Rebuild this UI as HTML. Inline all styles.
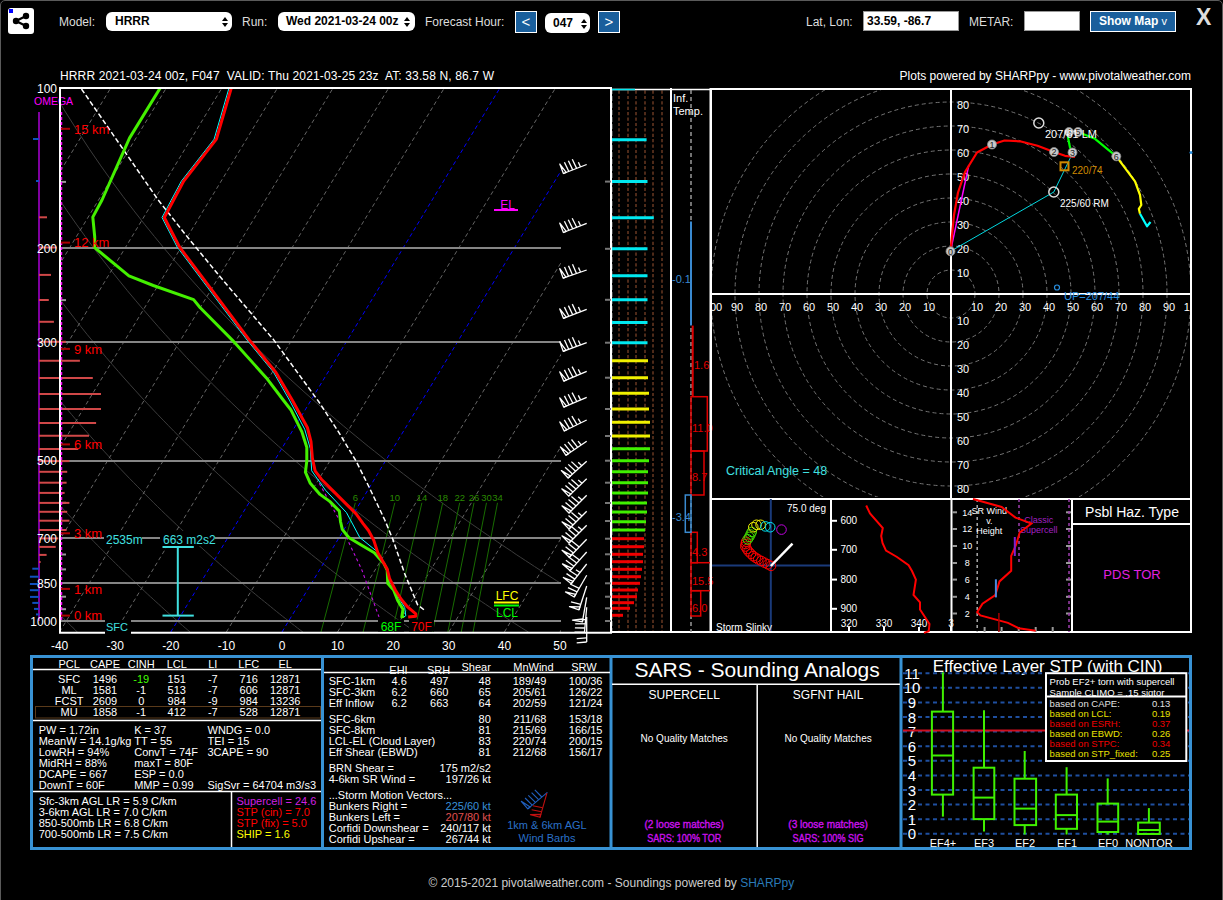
<!DOCTYPE html><html><head><meta charset="utf-8"><style>html,body{margin:0;padding:0;background:#000;width:1223px;height:900px;overflow:hidden;position:relative;font-family:"Liberation Sans", sans-serif;} svg text{font-family:"Liberation Sans", sans-serif;}</style></head><body>
<div style="position:absolute;left:0;top:0;width:1223px;height:1000px;box-sizing:border-box;border:1.5px solid #5a5a5a;border-radius:5px;"></div>
<div style="position:absolute;left:8px;top:8px;width:26px;height:26px;background:#fff;border-radius:3px;"></div>
<div style="position:absolute;left:9px;top:9px;width:4px;height:4px;background:#0000ff;"></div>
<svg style="position:absolute;left:8px;top:8px" width="26" height="26"><g fill="#000" stroke="#000" stroke-width="2.2"><line x1="8" y1="13" x2="18" y2="8"/><line x1="8" y1="13" x2="18" y2="18"/></g><circle cx="8" cy="13" r="3.2" fill="#000"/><circle cx="18" cy="8" r="3.2" fill="#000"/><circle cx="18" cy="18" r="3.2" fill="#000"/></svg>
<div style="position:absolute;color:#ddd;font-family:'Liberation Sans', sans-serif;font-size:12px;line-height:16px;left:59px;top:14px;">Model:</div>
<div style="position:absolute;color:#ddd;font-family:'Liberation Sans', sans-serif;font-size:12px;line-height:16px;left:242px;top:14px;">Run:</div>
<div style="position:absolute;color:#ddd;font-family:'Liberation Sans', sans-serif;font-size:12px;line-height:16px;left:425px;top:14px;">Forecast Hour:</div>
<div style="position:absolute;color:#ddd;font-family:'Liberation Sans', sans-serif;font-size:12px;line-height:16px;left:806px;top:14px;">Lat, Lon:</div>
<div style="position:absolute;color:#ddd;font-family:'Liberation Sans', sans-serif;font-size:12px;line-height:16px;left:969px;top:14px;">METAR:</div>
<div style="position:absolute;background:#fff;border-radius:6px;color:#000;font-family:'Liberation Sans', sans-serif;font-size:12px;font-weight:bold;line-height:19px;left:106px;top:12px;width:126px;height:19px;"><span style="position:absolute;left:9px;top:0">HRRR</span><svg style="position:absolute;left:115px;top:4px" width="8" height="12"><path d="M4 1 L7 5 L1 5 Z M4 11 L7 7 L1 7 Z" fill="#000"/></svg></div>
<div style="position:absolute;background:#fff;border-radius:6px;color:#000;font-family:'Liberation Sans', sans-serif;font-size:12px;font-weight:bold;line-height:19px;left:278px;top:12px;width:137px;height:19px;"><span style="position:absolute;left:8px;top:0">Wed 2021-03-24 00z</span><svg style="position:absolute;left:125px;top:4px" width="8" height="12"><path d="M4 1 L7 5 L1 5 Z M4 11 L7 7 L1 7 Z" fill="#000"/></svg></div>
<div style="position:absolute;background:#fff;border-radius:6px;color:#000;font-family:'Liberation Sans', sans-serif;font-size:12px;font-weight:bold;line-height:19px;left:545px;top:13px;width:45px;height:20px;"><span style="position:absolute;left:8px;top:1px">047</span><svg style="position:absolute;left:35px;top:5px" width="8" height="12"><path d="M4 1 L7 5 L1 5 Z M4 11 L7 7 L1 7 Z" fill="#000"/></svg></div>
<div style="position:absolute;background:#1a5f9c;border:1px solid #fff;box-sizing:border-box;color:#fff;font-family:'Liberation Sans', sans-serif;font-size:15px;text-align:center;left:515px;top:11px;width:22px;height:22px;line-height:19px;">&lt;</div>
<div style="position:absolute;background:#1a5f9c;border:1px solid #fff;box-sizing:border-box;color:#fff;font-family:'Liberation Sans', sans-serif;font-size:15px;text-align:center;left:598px;top:11px;width:22px;height:22px;line-height:19px;">&gt;</div>
<div style="position:absolute;left:863px;top:11px;width:96px;height:20px;background:#fff;box-sizing:border-box;border:1px solid #999;color:#000;font-family:'Liberation Sans', sans-serif;font-size:12px;font-weight:bold;line-height:18px;padding-left:3px;">33.59, -86.7</div>
<div style="position:absolute;left:1024px;top:11px;width:56px;height:20px;background:#fff;box-sizing:border-box;border:1px solid #999;"></div>
<div style="position:absolute;background:#1a5f9c;border:1px solid #fff;box-sizing:border-box;color:#fff;font-family:'Liberation Sans', sans-serif;font-size:15px;text-align:center;left:1090px;top:11px;width:86px;height:21px;font-size:12px;font-weight:bold;line-height:19px;">Show Map <span style="font-weight:normal;font-size:11px">v</span></div>
<div style="position:absolute;left:1196px;top:5px;color:#ddd;font-family:'Liberation Sans', sans-serif;font-size:23px;font-weight:bold;line-height:24px;">X</div>
<svg style="position:absolute;left:0;top:0" width="1223" height="900" viewBox="0 0 1223 900">
<defs><clipPath id="skc"><rect x="61" y="89" width="500" height="543"/></clipPath><clipPath id="skc2"><rect x="61" y="89" width="550" height="543"/></clipPath></defs>
<g clip-path="url(#skc)">
<polyline points="-35.2,632.3 -37.1,630.1 -39.1,627.9 -41.0,625.6 -43.0,623.4 -45.0,621.0 -47.0,618.7 -49.0,616.4 -51.0,614.0 -53.0,611.6 -55.0,609.2 -57.1,606.7 -59.2,604.2 -61.2,601.7 -63.3,599.2 -65.4,596.7 -67.5,594.1 -69.6,591.5 -71.7,588.8 -73.9,586.1 -76.0,583.4 -78.2,580.7 -80.4,577.9 -82.6,575.1 -84.8,572.3 -87.0,569.4 -89.2,566.5 -91.5,563.5 -93.7,560.5 -96.0,557.5 -98.3,554.5 -100.6,551.3 -102.9,548.2 -105.2,545.0 -107.6,541.8 -110.0,538.5 -112.3,535.1 -114.7,531.8 -117.1,528.3 -119.6,524.9 -122.0,521.3 -124.5,517.7 -127.0,514.1 -129.5,510.4 -132.0,506.6 -134.5,502.8 -137.1,498.9 -139.6,494.9 -142.2,490.9 -144.9,486.8 -147.5,482.6 -150.2,478.4 -152.8,474.1 -155.5,469.7 -158.3,465.2 -161.0,460.6 -163.8,455.9 -166.6,451.1 -169.4,446.3 -172.2,441.3 -175.1,436.2 -178.0,431.0 -180.9,425.7 -183.9,420.2 -186.8,414.6 -189.9,408.9 -192.9,403.1 -195.9,397.1 -199.0,390.9 -202.2,384.5 -205.3,378.0 -208.5,371.3 -211.7,364.4 -215.0,357.3 -218.3,349.9 -221.6,342.3 -224.9,334.5 -228.3,326.4 -231.8,317.9 -235.2,309.2 -238.7,300.1 -242.3,290.7 -245.8,280.8 -249.4,270.5 -253.1,259.8 -256.8,248.5 -260.5,236.6 -264.2,224.1 -268.0,210.8 -271.7,196.8 -275.5,181.9 -279.3,165.9 -283.1,148.7 -286.9,130.2 -290.6,110.1 -294.2,88.0" fill="none" stroke="#3c3c3c" stroke-width="1"/>
<polyline points="77.6,632.3 75.4,630.1 73.1,627.9 70.8,625.6 68.5,623.4 66.2,621.0 63.9,618.7 61.6,616.4 59.2,614.0 56.9,611.6 54.5,609.2 52.2,606.7 49.8,604.2 47.4,601.7 44.9,599.2 42.5,596.7 40.1,594.1 37.6,591.5 35.1,588.8 32.6,586.1 30.1,583.4 27.6,580.7 25.1,577.9 22.5,575.1 19.9,572.3 17.3,569.4 14.7,566.5 12.1,563.5 9.5,560.5 6.8,557.5 4.1,554.5 1.4,551.3 -1.3,548.2 -4.0,545.0 -6.8,541.8 -9.5,538.5 -12.3,535.1 -15.1,531.8 -18.0,528.3 -20.8,524.9 -23.7,521.3 -26.6,517.7 -29.5,514.1 -32.5,510.4 -35.4,506.6 -38.4,502.8 -41.4,498.9 -44.5,494.9 -47.6,490.9 -50.7,486.8 -53.8,482.6 -56.9,478.4 -60.1,474.1 -63.3,469.7 -66.5,465.2 -69.8,460.6 -73.1,455.9 -76.4,451.1 -79.8,446.3 -83.2,441.3 -86.6,436.2 -90.1,431.0 -93.6,425.7 -97.1,420.2 -100.7,414.6 -104.3,408.9 -107.9,403.1 -111.6,397.1 -115.4,390.9 -119.1,384.5 -123.0,378.0 -126.8,371.3 -130.7,364.4 -134.7,357.3 -138.7,349.9 -142.8,342.3 -146.9,334.5 -151.1,326.4 -155.3,317.9 -159.6,309.2 -163.9,300.1 -168.3,290.7 -172.8,280.8 -177.3,270.5 -181.9,259.8 -186.6,248.5 -191.3,236.6 -196.1,224.1 -201.0,210.8 -205.9,196.8 -210.9,181.9 -216.0,165.9 -221.1,148.7 -226.2,130.2 -231.4,110.1 -236.6,88.0" fill="none" stroke="#3c3c3c" stroke-width="1"/>
<polyline points="190.4,632.3 187.8,630.1 185.2,627.9 182.6,625.6 180.0,623.4 177.4,621.0 174.8,618.7 172.1,616.4 169.5,614.0 166.8,611.6 164.1,609.2 161.4,606.7 158.7,604.2 155.9,601.7 153.2,599.2 150.4,596.7 147.6,594.1 144.8,591.5 142.0,588.8 139.1,586.1 136.3,583.4 133.4,580.7 130.5,577.9 127.6,575.1 124.6,572.3 121.7,569.4 118.7,566.5 115.7,563.5 112.7,560.5 109.6,557.5 106.5,554.5 103.5,551.3 100.4,548.2 97.2,545.0 94.1,541.8 90.9,538.5 87.7,535.1 84.4,531.8 81.2,528.3 77.9,524.9 74.6,521.3 71.3,517.7 67.9,514.1 64.5,510.4 61.1,506.6 57.7,502.8 54.2,498.9 50.7,494.9 47.1,490.9 43.6,486.8 39.9,482.6 36.3,478.4 32.6,474.1 28.9,469.7 25.2,465.2 21.4,460.6 17.6,455.9 13.7,451.1 9.8,446.3 5.9,441.3 1.9,436.2 -2.1,431.0 -6.2,425.7 -10.3,420.2 -14.5,414.6 -18.7,408.9 -23.0,403.1 -27.3,397.1 -31.7,390.9 -36.1,384.5 -40.6,378.0 -45.1,371.3 -49.8,364.4 -54.4,357.3 -59.2,349.9 -64.0,342.3 -68.8,334.5 -73.8,326.4 -78.8,317.9 -83.9,309.2 -89.1,300.1 -94.4,290.7 -99.7,280.8 -105.2,270.5 -110.8,259.8 -116.4,248.5 -122.2,236.6 -128.0,224.1 -134.0,210.8 -140.1,196.8 -146.3,181.9 -152.6,165.9 -159.0,148.7 -165.6,130.2 -172.3,110.1 -179.1,88.0" fill="none" stroke="#3c3c3c" stroke-width="1"/>
<polyline points="303.1,632.3 300.3,630.1 297.4,627.9 294.5,625.6 291.6,623.4 288.6,621.0 285.7,618.7 282.7,616.4 279.7,614.0 276.7,611.6 273.7,609.2 270.7,606.7 267.6,604.2 264.5,601.7 261.4,599.2 258.3,596.7 255.2,594.1 252.0,591.5 248.8,588.8 245.6,586.1 242.4,583.4 239.2,580.7 235.9,577.9 232.6,575.1 229.3,572.3 226.0,569.4 222.6,566.5 219.2,563.5 215.8,560.5 212.4,557.5 209.0,554.5 205.5,551.3 202.0,548.2 198.4,545.0 194.9,541.8 191.3,538.5 187.7,535.1 184.0,531.8 180.4,528.3 176.7,524.9 172.9,521.3 169.1,517.7 165.3,514.1 161.5,510.4 157.6,506.6 153.7,502.8 149.8,498.9 145.8,494.9 141.8,490.9 137.8,486.8 133.7,482.6 129.5,478.4 125.4,474.1 121.2,469.7 116.9,465.2 112.6,460.6 108.3,455.9 103.9,451.1 99.4,446.3 94.9,441.3 90.4,436.2 85.8,431.0 81.1,425.7 76.4,420.2 71.7,414.6 66.8,408.9 62.0,403.1 57.0,397.1 52.0,390.9 46.9,384.5 41.8,378.0 36.5,371.3 31.2,364.4 25.8,357.3 20.4,349.9 14.8,342.3 9.2,334.5 3.5,326.4 -2.4,317.9 -8.3,309.2 -14.3,300.1 -20.5,290.7 -26.7,280.8 -33.1,270.5 -39.6,259.8 -46.2,248.5 -53.0,236.6 -59.9,224.1 -67.0,210.8 -74.2,196.8 -81.6,181.9 -89.2,165.9 -97.0,148.7 -105.0,130.2 -113.1,110.1 -121.5,88.0" fill="none" stroke="#3c3c3c" stroke-width="1"/>
<polyline points="415.9,632.3 412.7,630.1 409.5,627.9 406.3,625.6 403.1,623.4 399.8,621.0 396.6,618.7 393.3,616.4 390.0,614.0 386.6,611.6 383.3,609.2 379.9,606.7 376.5,604.2 373.1,601.7 369.7,599.2 366.2,596.7 362.7,594.1 359.2,591.5 355.7,588.8 352.1,586.1 348.6,583.4 345.0,580.7 341.3,577.9 337.7,575.1 334.0,572.3 330.3,569.4 326.6,566.5 322.8,563.5 319.0,560.5 315.2,557.5 311.4,554.5 307.5,551.3 303.6,548.2 299.7,545.0 295.7,541.8 291.7,538.5 287.7,535.1 283.6,531.8 279.5,528.3 275.4,524.9 271.2,521.3 267.0,517.7 262.8,514.1 258.5,510.4 254.2,506.6 249.8,502.8 245.4,498.9 241.0,494.9 236.5,490.9 232.0,486.8 227.4,482.6 222.8,478.4 218.1,474.1 213.4,469.7 208.6,465.2 203.8,460.6 198.9,455.9 194.0,451.1 189.0,446.3 184.0,441.3 178.9,436.2 173.7,431.0 168.5,425.7 163.2,420.2 157.8,414.6 152.4,408.9 146.9,403.1 141.3,397.1 135.7,390.9 129.9,384.5 124.1,378.0 118.2,371.3 112.2,364.4 106.1,357.3 99.9,349.9 93.6,342.3 87.2,334.5 80.7,326.4 74.1,317.9 67.4,309.2 60.5,300.1 53.5,290.7 46.3,280.8 39.0,270.5 31.6,259.8 24.0,248.5 16.2,236.6 8.2,224.1 0.0,210.8 -8.4,196.8 -17.0,181.9 -25.8,165.9 -34.9,148.7 -44.3,130.2 -54.0,110.1 -63.9,88.0" fill="none" stroke="#3c3c3c" stroke-width="1"/>
<polyline points="528.7,632.3 525.2,630.1 521.7,627.9 518.1,625.6 514.6,623.4 511.0,621.0 507.4,618.7 503.8,616.4 500.2,614.0 496.5,611.6 492.9,609.2 489.2,606.7 485.4,604.2 481.7,601.7 477.9,599.2 474.1,596.7 470.3,594.1 466.4,591.5 462.5,588.8 458.6,586.1 454.7,583.4 450.8,580.7 446.8,577.9 442.8,575.1 438.7,572.3 434.6,569.4 430.5,566.5 426.4,563.5 422.2,560.5 418.0,557.5 413.8,554.5 409.5,551.3 405.2,548.2 400.9,545.0 396.5,541.8 392.1,538.5 387.7,535.1 383.2,531.8 378.7,528.3 374.1,524.9 369.5,521.3 364.9,517.7 360.2,514.1 355.5,510.4 350.7,506.6 345.9,502.8 341.0,498.9 336.1,494.9 331.2,490.9 326.2,486.8 321.1,482.6 316.0,478.4 310.8,474.1 305.6,469.7 300.3,465.2 295.0,460.6 289.6,455.9 284.1,451.1 278.6,446.3 273.0,441.3 267.4,436.2 261.6,431.0 255.8,425.7 250.0,420.2 244.0,414.6 238.0,408.9 231.9,403.1 225.6,397.1 219.4,390.9 213.0,384.5 206.5,378.0 199.9,371.3 193.2,364.4 186.4,357.3 179.5,349.9 172.4,342.3 165.3,334.5 158.0,326.4 150.6,317.9 143.0,309.2 135.3,300.1 127.4,290.7 119.4,280.8 111.1,270.5 102.7,259.8 94.1,248.5 85.3,236.6 76.3,224.1 67.0,210.8 57.5,196.8 47.6,181.9 37.5,165.9 27.1,148.7 16.3,130.2 5.2,110.1 -6.4,88.0" fill="none" stroke="#3c3c3c" stroke-width="1"/>
<polyline points="641.4,632.3 637.6,630.1 633.8,627.9 630.0,625.6 626.1,623.4 622.2,621.0 618.3,618.7 614.4,616.4 610.4,614.0 606.4,611.6 602.4,609.2 598.4,606.7 594.3,604.2 590.3,601.7 586.1,599.2 582.0,596.7 577.8,594.1 573.6,591.5 569.4,588.8 565.1,586.1 560.9,583.4 556.5,580.7 552.2,577.9 547.8,575.1 543.4,572.3 539.0,569.4 534.5,566.5 530.0,563.5 525.4,560.5 520.8,557.5 516.2,554.5 511.6,551.3 506.9,548.2 502.1,545.0 497.4,541.8 492.5,538.5 487.7,535.1 482.8,531.8 477.9,528.3 472.9,524.9 467.8,521.3 462.8,517.7 457.7,514.1 452.5,510.4 447.3,506.6 442.0,502.8 436.7,498.9 431.3,494.9 425.9,490.9 420.4,486.8 414.8,482.6 409.2,478.4 403.6,474.1 397.9,469.7 392.1,465.2 386.2,460.6 380.3,455.9 374.3,451.1 368.2,446.3 362.1,441.3 355.9,436.2 349.6,431.0 343.2,425.7 336.7,420.2 330.2,414.6 323.5,408.9 316.8,403.1 310.0,397.1 303.0,390.9 296.0,384.5 288.8,378.0 281.6,371.3 274.2,364.4 266.7,357.3 259.0,349.9 251.3,342.3 243.3,334.5 235.3,326.4 227.0,317.9 218.7,309.2 210.1,300.1 201.3,290.7 192.4,280.8 183.3,270.5 173.9,259.8 164.3,248.5 154.5,236.6 144.4,224.1 134.0,210.8 123.3,196.8 112.3,181.9 100.9,165.9 89.1,148.7 77.0,130.2 64.3,110.1 51.2,88.0" fill="none" stroke="#3c3c3c" stroke-width="1"/>
<line x1="-607.6" y1="632" x2="-278.5" y2="88" stroke="#666" stroke-width="1" stroke-dasharray="4,3"/>
<line x1="-552.0" y1="632" x2="-222.9" y2="88" stroke="#666" stroke-width="1" stroke-dasharray="4,3"/>
<line x1="-496.4" y1="632" x2="-167.3" y2="88" stroke="#666" stroke-width="1" stroke-dasharray="4,3"/>
<line x1="-440.8" y1="632" x2="-111.7" y2="88" stroke="#666" stroke-width="1" stroke-dasharray="4,3"/>
<line x1="-385.2" y1="632" x2="-56.1" y2="88" stroke="#666" stroke-width="1" stroke-dasharray="4,3"/>
<line x1="-329.6" y1="632" x2="-0.5" y2="88" stroke="#666" stroke-width="1" stroke-dasharray="4,3"/>
<line x1="-274.0" y1="632" x2="55.1" y2="88" stroke="#666" stroke-width="1" stroke-dasharray="4,3"/>
<line x1="-218.4" y1="632" x2="110.7" y2="88" stroke="#666" stroke-width="1" stroke-dasharray="4,3"/>
<line x1="-162.8" y1="632" x2="166.3" y2="88" stroke="#666" stroke-width="1" stroke-dasharray="4,3"/>
<line x1="-107.2" y1="632" x2="221.9" y2="88" stroke="#666" stroke-width="1" stroke-dasharray="4,3"/>
<line x1="-51.6" y1="632" x2="277.5" y2="88" stroke="#666" stroke-width="1" stroke-dasharray="4,3"/>
<line x1="4.0" y1="632" x2="333.1" y2="88" stroke="#666" stroke-width="1" stroke-dasharray="4,3"/>
<line x1="59.6" y1="632" x2="388.7" y2="88" stroke="#666" stroke-width="1" stroke-dasharray="4,3"/>
<line x1="115.2" y1="632" x2="444.3" y2="88" stroke="#666" stroke-width="1" stroke-dasharray="4,3"/>
<line x1="170.8" y1="632" x2="499.9" y2="88" stroke="#0000ff" stroke-width="1" stroke-dasharray="4,3"/>
<line x1="226.4" y1="632" x2="555.5" y2="88" stroke="#666" stroke-width="1" stroke-dasharray="4,3"/>
<line x1="282.0" y1="632" x2="611.1" y2="88" stroke="#0000ff" stroke-width="1" stroke-dasharray="4,3"/>
<line x1="337.6" y1="632" x2="666.7" y2="88" stroke="#666" stroke-width="1" stroke-dasharray="4,3"/>
<line x1="393.2" y1="632" x2="722.3" y2="88" stroke="#666" stroke-width="1" stroke-dasharray="4,3"/>
<line x1="448.8" y1="632" x2="777.9" y2="88" stroke="#666" stroke-width="1" stroke-dasharray="4,3"/>
<line x1="504.4" y1="632" x2="833.5" y2="88" stroke="#666" stroke-width="1" stroke-dasharray="4,3"/>
<line x1="560.0" y1="632" x2="889.1" y2="88" stroke="#666" stroke-width="1" stroke-dasharray="4,3"/>
<line x1="320.9" y1="632.3" x2="355.3" y2="502.8" stroke="#186c00" stroke-width="1"/>
<text x="355.3" y="500.8" fill="#2a8a00" font-size="9.5" text-anchor="middle">6</text>
<line x1="363.0" y1="632.3" x2="394.8" y2="502.8" stroke="#186c00" stroke-width="1"/>
<text x="394.8" y="500.8" fill="#2a8a00" font-size="9.5" text-anchor="middle">10</text>
<line x1="392.0" y1="632.3" x2="421.9" y2="502.8" stroke="#186c00" stroke-width="1"/>
<text x="421.9" y="500.8" fill="#2a8a00" font-size="9.5" text-anchor="middle">14</text>
<line x1="414.3" y1="632.3" x2="442.7" y2="502.8" stroke="#186c00" stroke-width="1"/>
<text x="442.7" y="500.8" fill="#2a8a00" font-size="9.5" text-anchor="middle">18</text>
<line x1="432.5" y1="632.3" x2="459.7" y2="502.8" stroke="#186c00" stroke-width="1"/>
<text x="459.7" y="500.8" fill="#2a8a00" font-size="9.5" text-anchor="middle">22</text>
<line x1="447.8" y1="632.3" x2="474.0" y2="502.8" stroke="#186c00" stroke-width="1"/>
<text x="474.0" y="500.8" fill="#2a8a00" font-size="9.5" text-anchor="middle">26</text>
<line x1="461.2" y1="632.3" x2="486.5" y2="502.8" stroke="#186c00" stroke-width="1"/>
<text x="486.5" y="500.8" fill="#2a8a00" font-size="9.5" text-anchor="middle">30</text>
<line x1="473.0" y1="632.3" x2="497.5" y2="502.8" stroke="#186c00" stroke-width="1"/>
<text x="497.5" y="500.8" fill="#2a8a00" font-size="9.5" text-anchor="middle">34</text>
<line x1="60" y1="248.0" x2="561" y2="248.0" stroke="#858585" stroke-width="2"/>
<line x1="60" y1="342.0" x2="561" y2="342.0" stroke="#858585" stroke-width="2"/>
<line x1="60" y1="461.0" x2="561" y2="461.0" stroke="#858585" stroke-width="2"/>
<line x1="60" y1="538.0" x2="561" y2="538.0" stroke="#858585" stroke-width="2"/>
<line x1="60" y1="583.0" x2="561" y2="583.0" stroke="#858585" stroke-width="2"/>
<line x1="60" y1="621.0" x2="561" y2="621.0" stroke="#858585" stroke-width="2"/>
</g>
<line x1="60" y1="181.9" x2="66" y2="181.9" stroke="#999" stroke-width="2"/>
<line x1="60" y1="300.1" x2="66" y2="300.1" stroke="#999" stroke-width="2"/>
<line x1="60" y1="408.9" x2="66" y2="408.9" stroke="#999" stroke-width="2"/>
<line x1="60" y1="502.8" x2="66" y2="502.8" stroke="#999" stroke-width="2"/>
<line x1="60" y1="554.5" x2="66" y2="554.5" stroke="#999" stroke-width="2"/>
<line x1="60" y1="569.4" x2="66" y2="569.4" stroke="#999" stroke-width="2"/>
<line x1="60" y1="596.7" x2="66" y2="596.7" stroke="#999" stroke-width="2"/>
<line x1="60" y1="609.2" x2="66" y2="609.2" stroke="#999" stroke-width="2"/>
<text x="59.6" y="650" fill="#fff" font-size="12" text-anchor="middle">-40</text>
<text x="115.2" y="650" fill="#fff" font-size="12" text-anchor="middle">-30</text>
<text x="170.8" y="650" fill="#fff" font-size="12" text-anchor="middle">-20</text>
<text x="226.4" y="650" fill="#fff" font-size="12" text-anchor="middle">-10</text>
<text x="282.0" y="650" fill="#fff" font-size="12" text-anchor="middle">0</text>
<text x="337.6" y="650" fill="#fff" font-size="12" text-anchor="middle">10</text>
<text x="393.2" y="650" fill="#fff" font-size="12" text-anchor="middle">20</text>
<text x="448.8" y="650" fill="#fff" font-size="12" text-anchor="middle">30</text>
<text x="504.4" y="650" fill="#fff" font-size="12" text-anchor="middle">40</text>
<text x="560.0" y="650" fill="#fff" font-size="12" text-anchor="middle">50</text>
<g clip-path="url(#skc2)">
<polyline points="319.3,483.3 339.3,520.0 347.5,539.8 361.5,569.0 379.0,616.9" fill="none" stroke="#c010e0" stroke-width="1.1" stroke-dasharray="3,3"/>
<polyline points="81.5,89.0 158.2,200.0 189.8,240.0 221.0,277.8 273.9,340.1 319.3,402.5 339.4,433.3 356.1,461.1 369.3,487.5 384.8,520.0 393.0,539.8 404.7,573.7 417.5,604.6 423.9,609.8" fill="none" stroke="#fff" stroke-width="1.5" stroke-dasharray="5,2.5"/>
<polyline points="229.0,88.0 214.1,139.2 181.4,181.1 162.0,217.5 177.3,247.3 179.0,249.4 207.4,287.2 247.1,340.1 273.5,372.2 289.4,400.0 304.7,429.2 310.3,448.6 311.7,470.8 325.6,490.3 346.4,512.5 351.0,521.0 359.8,537.5 375.5,550.3 381.0,557.0 386.0,568.0 389.0,580.0 395.5,592.0 400.0,600.0 404.7,607.5 405.8,615.7 403.0,617.5" fill="none" stroke="#00ffff" stroke-width="1" />
<polyline points="160.2,88.0 129.5,138.1 102.0,200.0 92.8,217.1 94.7,236.7 94.7,247.7 128.9,275.8 153.3,285.5 193.6,299.6 200.0,307.5 232.3,340.1 266.4,377.9 283.2,400.0 290.8,409.7 301.9,431.9 306.8,447.2 306.8,461.1 305.4,472.2 310.3,483.3 320.0,494.4 329.7,501.4 339.4,511.1 340.5,521.5 342.3,529.3 348.7,537.5 360.3,544.5 374.3,552.7 383.7,563.2 387.2,570.2 387.8,583.6 393.6,590.0 397.7,600.5 403.0,609.3 401.8,616.9 404.0,616.3" fill="none" stroke="#44f000" stroke-width="3" stroke-linejoin="round"/>
<polyline points="231.3,88.0 216.4,139.2 183.7,181.1 164.3,217.5 179.6,247.3 181.3,249.4 209.7,287.2 249.4,340.1 275.8,372.2 292.2,400.0 299.9,413.9 307.5,427.8 311.0,441.7 312.4,458.3 315.1,470.8 321.4,479.2 335.3,493.1 347.8,505.6 356.1,513.9 363.1,523.6 368.5,530.5 373.8,540.4 377.8,552.7 387.2,569.0 389.5,578.3 395.3,590.0 401.2,599.3 407.0,606.3 415.8,613.9 415.8,616.3 408.2,616.9" fill="none" stroke="#ff0000" stroke-width="3" stroke-linejoin="round"/>
</g>
<text x="34" y="104.8" fill="#ff00ff" font-size="10.5">OMEGA</text>
<line x1="39" y1="112" x2="39" y2="621" stroke="#8000a0" stroke-width="2"/>
<line x1="39" y1="139.0" x2="33.0" y2="139.0" stroke="#1050c0" stroke-width="2"/>
<line x1="39" y1="181.0" x2="36.0" y2="181.0" stroke="#1050c0" stroke-width="2"/>
<line x1="39" y1="217.3" x2="47.0" y2="217.3" stroke="#d04848" stroke-width="2"/>
<line x1="39" y1="247.5" x2="57.0" y2="247.5" stroke="#d04848" stroke-width="2"/>
<line x1="39" y1="274.9" x2="51.0" y2="274.9" stroke="#d04848" stroke-width="2"/>
<line x1="39" y1="300.0" x2="48.8" y2="300.0" stroke="#d04848" stroke-width="2"/>
<line x1="39" y1="321.8" x2="53.9" y2="321.8" stroke="#d04848" stroke-width="2"/>
<line x1="39" y1="341.8" x2="66.0" y2="341.8" stroke="#d04848" stroke-width="2"/>
<line x1="39" y1="360.7" x2="79.9" y2="360.7" stroke="#d04848" stroke-width="2"/>
<line x1="39" y1="378.0" x2="92.8" y2="378.0" stroke="#d04848" stroke-width="2"/>
<line x1="39" y1="394.0" x2="101.0" y2="394.0" stroke="#d04848" stroke-width="2"/>
<line x1="39" y1="408.9" x2="101.0" y2="408.9" stroke="#d04848" stroke-width="2"/>
<line x1="39" y1="422.9" x2="96.1" y2="422.9" stroke="#d04848" stroke-width="2"/>
<line x1="39" y1="435.8" x2="89.0" y2="435.8" stroke="#d04848" stroke-width="2"/>
<line x1="39" y1="448.9" x2="78.3" y2="448.9" stroke="#d04848" stroke-width="2"/>
<line x1="39" y1="461.1" x2="69.4" y2="461.1" stroke="#d04848" stroke-width="2"/>
<line x1="39" y1="471.8" x2="67.2" y2="471.8" stroke="#d04848" stroke-width="2"/>
<line x1="39" y1="482.7" x2="66.6" y2="482.7" stroke="#d04848" stroke-width="2"/>
<line x1="39" y1="492.9" x2="64.6" y2="492.9" stroke="#d04848" stroke-width="2"/>
<line x1="39" y1="502.9" x2="69.4" y2="502.9" stroke="#d04848" stroke-width="2"/>
<line x1="39" y1="511.8" x2="67.2" y2="511.8" stroke="#d04848" stroke-width="2"/>
<line x1="39" y1="520.7" x2="69.4" y2="520.7" stroke="#d04848" stroke-width="2"/>
<line x1="39" y1="530.0" x2="66.6" y2="530.0" stroke="#d04848" stroke-width="2"/>
<line x1="39" y1="538.4" x2="58.3" y2="538.4" stroke="#d04848" stroke-width="2"/>
<line x1="39" y1="546.9" x2="55.7" y2="546.9" stroke="#d04848" stroke-width="2"/>
<line x1="39" y1="554.9" x2="46.6" y2="554.9" stroke="#d04848" stroke-width="2"/>
<line x1="39" y1="562.0" x2="40.6" y2="562.0" stroke="#d04848" stroke-width="2"/>
<line x1="39" y1="568.7" x2="32.3" y2="568.7" stroke="#1050c0" stroke-width="2"/>
<line x1="39" y1="576.7" x2="29.9" y2="576.7" stroke="#1050c0" stroke-width="2"/>
<line x1="39" y1="584.0" x2="29.9" y2="584.0" stroke="#1050c0" stroke-width="2"/>
<line x1="39" y1="590.2" x2="29.9" y2="590.2" stroke="#1050c0" stroke-width="2"/>
<line x1="39" y1="596.9" x2="30.0" y2="596.9" stroke="#1050c0" stroke-width="2"/>
<line x1="39" y1="602.9" x2="32.3" y2="602.9" stroke="#1050c0" stroke-width="2"/>
<line x1="39" y1="608.9" x2="34.0" y2="608.9" stroke="#1050c0" stroke-width="2"/>
<line x1="39" y1="614.4" x2="36.0" y2="614.4" stroke="#1050c0" stroke-width="2"/>
<line x1="59" y1="88" x2="612" y2="88" stroke="#fff" stroke-width="2"/>
<line x1="60" y1="88" x2="60" y2="633" stroke="#fff" stroke-width="2"/>
<line x1="59" y1="632.8" x2="612" y2="632.8" stroke="#fff" stroke-width="2"/>
<line x1="611" y1="88" x2="611" y2="633" stroke="#fff" stroke-width="2"/>
<line x1="61.5" y1="112" x2="61.5" y2="621" stroke="#ff00ff" stroke-width="1.5" stroke-dasharray="3,2"/>
<line x1="61" y1="128.8" x2="70" y2="128.8" stroke="#aa0000" stroke-width="2"/>
<text x="74" y="133.6" fill="#ff0000" font-size="13">15 km</text>
<line x1="61" y1="242.6" x2="70" y2="242.6" stroke="#aa0000" stroke-width="2"/>
<text x="74" y="247.4" fill="#ff0000" font-size="13">12 km</text>
<line x1="61" y1="348.9" x2="70" y2="348.9" stroke="#aa0000" stroke-width="2"/>
<text x="74" y="353.7" fill="#ff0000" font-size="13">9 km</text>
<line x1="61" y1="444.4" x2="70" y2="444.4" stroke="#aa0000" stroke-width="2"/>
<text x="74" y="449.2" fill="#ff0000" font-size="13">6 km</text>
<line x1="61" y1="533.3" x2="70" y2="533.3" stroke="#aa0000" stroke-width="2"/>
<text x="74" y="538.1" fill="#ff0000" font-size="13">3 km</text>
<line x1="61" y1="588.9" x2="70" y2="588.9" stroke="#aa0000" stroke-width="2"/>
<text x="74" y="593.7" fill="#ff0000" font-size="13">1 km</text>
<line x1="61" y1="615.6" x2="70" y2="615.6" stroke="#aa0000" stroke-width="2"/>
<text x="74" y="620.4" fill="#ff0000" font-size="13">0 km</text>
<line x1="177.8" y1="547" x2="177.8" y2="615.6" stroke="#40e0e0" stroke-width="2"/>
<line x1="162.5" y1="547" x2="193.8" y2="547" stroke="#40e0e0" stroke-width="2"/>
<line x1="162.5" y1="615.6" x2="193.8" y2="615.6" stroke="#40e0e0" stroke-width="2"/>
<rect x="104" y="531" width="38" height="15" fill="#000"/><text x="106" y="543.5" fill="#40e0e0" font-size="12">2535m</text>
<rect x="160" y="531" width="55" height="15" fill="#000"/><text x="163" y="543.5" fill="#40e0e0" font-size="12">663 m2s2</text>
<rect x="105" y="619.8" width="26" height="14.5" fill="#000"/><text x="106" y="631.3" fill="#40e0e0" font-size="11">SFC</text>
<rect x="378" y="619.5" width="26" height="12" fill="#000"/><text x="391" y="631" fill="#00ff00" font-size="12" text-anchor="middle">68F</text>
<rect x="409" y="619.5" width="25" height="12" fill="#000"/><text x="421.5" y="631" fill="#ff0000" font-size="12" text-anchor="middle">70F</text>
<text x="507" y="600" fill="#ffff00" font-size="12" text-anchor="middle">LFC</text>
<line x1="494" y1="602.5" x2="519" y2="602.5" stroke="#ffff00" stroke-width="2"/>
<line x1="494" y1="605.5" x2="519" y2="605.5" stroke="#00ff00" stroke-width="2"/>
<text x="507" y="617" fill="#00ff00" font-size="12" text-anchor="middle">LCL</text>
<text x="507.5" y="209" fill="#ff00ff" font-size="12" text-anchor="middle">EL</text>
<line x1="494" y1="210" x2="518" y2="210" stroke="#ff00ff" stroke-width="2"/>
<text x="57" y="92.5" fill="#fff" font-size="12" text-anchor="end">100</text>
<text x="57" y="253.0" fill="#fff" font-size="12" text-anchor="end">200</text>
<text x="57" y="346.8" fill="#fff" font-size="12" text-anchor="end">300</text>
<text x="57" y="465.1" fill="#fff" font-size="12" text-anchor="end">500</text>
<text x="57" y="543.0" fill="#fff" font-size="12" text-anchor="end">700</text>
<text x="57" y="587.9" fill="#fff" font-size="12" text-anchor="end">850</text>
<text x="57" y="625.5" fill="#fff" font-size="12" text-anchor="end">1000</text>
<g stroke="#fff" stroke-width="1.3" stroke-linejoin="round" fill="none">
<line x1="586.7" y1="164.5" x2="563.4" y2="173.5"/>
<polygon points="563.4,173.5 559.8,164.1 566.2,172.4" fill="none"/>
<line x1="568.8" y1="171.4" x2="564.4" y2="162.3"/>
<line x1="572.7" y1="169.9" x2="568.4" y2="160.8"/>
<line x1="576.6" y1="168.4" x2="572.3" y2="159.3"/>
<line x1="580.5" y1="166.9" x2="578.4" y2="162.3"/>
<line x1="586.7" y1="223.3" x2="563.4" y2="232.5"/>
<polygon points="563.4,232.5 559.8,223.2 566.2,231.4" fill="none"/>
<line x1="568.8" y1="230.3" x2="564.4" y2="221.3"/>
<line x1="572.7" y1="228.8" x2="568.3" y2="219.8"/>
<line x1="576.7" y1="227.3" x2="572.2" y2="218.2"/>
<line x1="580.6" y1="225.7" x2="578.4" y2="221.2"/>
<line x1="586.7" y1="270.0" x2="563.1" y2="278.1"/>
<polygon points="563.1,278.1 559.8,268.7 565.9,277.2" fill="none"/>
<line x1="568.5" y1="276.3" x2="564.5" y2="267.1"/>
<line x1="572.5" y1="274.9" x2="568.5" y2="265.7"/>
<line x1="576.5" y1="273.5" x2="572.5" y2="264.3"/>
<line x1="580.5" y1="272.1" x2="578.5" y2="267.6"/>
<line x1="586.7" y1="309.3" x2="563.4" y2="318.3"/>
<polygon points="563.4,318.3 559.8,308.9 566.2,317.2" fill="none"/>
<line x1="568.8" y1="316.2" x2="564.4" y2="307.1"/>
<line x1="572.7" y1="314.7" x2="568.4" y2="305.6"/>
<line x1="576.6" y1="313.2" x2="572.3" y2="304.1"/>
<line x1="580.5" y1="311.7" x2="578.4" y2="307.1"/>
<line x1="586.7" y1="342.7" x2="563.2" y2="351.3"/>
<polygon points="563.2,351.3 559.8,341.9 566.0,350.2" fill="none"/>
<line x1="568.7" y1="349.3" x2="564.5" y2="340.1"/>
<line x1="572.6" y1="347.8" x2="568.4" y2="338.7"/>
<line x1="576.6" y1="346.4" x2="572.4" y2="337.3"/>
<line x1="580.5" y1="345.0" x2="578.4" y2="340.4"/>
<line x1="586.7" y1="371.3" x2="563.7" y2="381.1"/>
<polygon points="563.7,381.1 559.8,371.9 566.4,379.9" fill="none"/>
<line x1="569.0" y1="378.8" x2="564.4" y2="369.9"/>
<line x1="572.9" y1="377.2" x2="568.2" y2="368.3"/>
<line x1="576.8" y1="375.5" x2="572.1" y2="366.6"/>
<line x1="580.6" y1="373.9" x2="578.3" y2="369.4"/>
<line x1="586.7" y1="397.3" x2="563.7" y2="407.1"/>
<polygon points="563.7,407.1 559.8,397.9 566.4,405.9" fill="none"/>
<line x1="569.0" y1="404.8" x2="564.4" y2="395.9"/>
<line x1="572.9" y1="403.2" x2="568.2" y2="394.3"/>
<line x1="576.8" y1="401.5" x2="572.1" y2="392.6"/>
<line x1="580.6" y1="399.9" x2="578.3" y2="395.4"/>
<line x1="586.7" y1="420.0" x2="564.2" y2="431.0"/>
<polygon points="564.2,431.0 559.8,422.0 566.9,429.6" fill="none"/>
<line x1="569.4" y1="428.4" x2="564.3" y2="419.8"/>
<line x1="573.2" y1="426.6" x2="568.1" y2="417.9"/>
<line x1="577.0" y1="424.7" x2="571.9" y2="416.1"/>
<line x1="580.8" y1="422.9" x2="578.2" y2="418.6"/>
<line x1="586.7" y1="441.3" x2="566.0" y2="455.3"/>
<polygon points="566.0,455.3 560.4,447.0 568.5,453.6" fill="none"/>
<line x1="570.8" y1="452.0" x2="564.5" y2="444.2"/>
<line x1="574.3" y1="449.7" x2="568.0" y2="441.8"/>
<line x1="577.7" y1="447.3" x2="571.5" y2="439.5"/>
<line x1="581.2" y1="445.0" x2="578.1" y2="441.1"/>
<line x1="586.7" y1="461.3" x2="568.1" y2="478.0"/>
<polygon points="568.1,478.0 561.4,470.6 570.4,476.0" fill="none"/>
<line x1="572.4" y1="474.1" x2="565.1" y2="467.3"/>
<line x1="575.6" y1="471.3" x2="568.3" y2="464.4"/>
<line x1="578.7" y1="468.5" x2="571.4" y2="461.6"/>
<line x1="581.8" y1="465.7" x2="578.2" y2="462.3"/>
<line x1="586.7" y1="478.7" x2="568.7" y2="496.1"/>
<polygon points="568.7,496.1 561.8,488.9 570.9,494.0" fill="none"/>
<line x1="572.9" y1="492.0" x2="565.4" y2="485.4"/>
<line x1="575.9" y1="489.1" x2="568.4" y2="482.5"/>
<line x1="578.9" y1="486.2" x2="571.4" y2="479.6"/>
<line x1="582.0" y1="483.3" x2="578.2" y2="480.0"/>
<line x1="586.7" y1="495.3" x2="569.0" y2="513.0"/>
<polygon points="569.0,513.0 562.0,505.9 571.1,510.9" fill="none"/>
<line x1="573.1" y1="508.9" x2="565.5" y2="502.4"/>
<line x1="576.1" y1="505.9" x2="568.5" y2="499.4"/>
<line x1="579.1" y1="502.9" x2="571.4" y2="496.4"/>
<line x1="582.0" y1="500.0" x2="578.2" y2="496.7"/>
<line x1="586.7" y1="511.3" x2="569.0" y2="529.0"/>
<polygon points="569.0,529.0 562.0,521.9 571.1,526.9" fill="none"/>
<line x1="573.1" y1="524.9" x2="565.5" y2="518.4"/>
<line x1="576.1" y1="521.9" x2="568.5" y2="515.4"/>
<line x1="579.1" y1="518.9" x2="571.4" y2="512.4"/>
<line x1="582.0" y1="516.0" x2="578.2" y2="512.7"/>
<line x1="586.7" y1="525.3" x2="569.0" y2="543.0"/>
<polygon points="569.0,543.0 562.0,535.9 571.1,540.9" fill="none"/>
<line x1="573.1" y1="538.9" x2="565.5" y2="532.4"/>
<line x1="576.1" y1="535.9" x2="568.5" y2="529.4"/>
<line x1="579.1" y1="532.9" x2="571.4" y2="526.4"/>
<line x1="582.0" y1="530.0" x2="578.2" y2="526.7"/>
<line x1="586.7" y1="539.3" x2="569.3" y2="557.3"/>
<polygon points="569.3,557.3 562.1,550.3 571.4,555.1" fill="none"/>
<line x1="573.4" y1="553.1" x2="565.6" y2="546.7"/>
<line x1="576.3" y1="550.1" x2="568.5" y2="543.7"/>
<line x1="579.2" y1="547.1" x2="571.4" y2="540.7"/>
<line x1="586.7" y1="552.0" x2="570.0" y2="570.6"/>
<polygon points="570.0,570.6 562.5,563.9 572.0,568.3" fill="none"/>
<line x1="573.9" y1="566.3" x2="565.9" y2="560.2"/>
<line x1="576.7" y1="563.1" x2="568.7" y2="557.1"/>
<line x1="579.5" y1="560.0" x2="571.5" y2="553.9"/>
<line x1="586.7" y1="564.0" x2="571.3" y2="583.7"/>
<polygon points="571.3,583.7 563.4,577.5 573.2,581.3" fill="none"/>
<line x1="574.9" y1="579.1" x2="566.5" y2="573.6"/>
<line x1="577.5" y1="575.8" x2="569.1" y2="570.3"/>
<line x1="580.1" y1="572.5" x2="575.9" y2="569.7"/>
<line x1="586.7" y1="575.3" x2="574.2" y2="597.0"/>
<polygon points="574.2,597.0 565.5,592.0 575.7,594.4" fill="none"/>
<line x1="577.1" y1="591.9" x2="568.0" y2="587.6"/>
<line x1="579.2" y1="588.3" x2="570.1" y2="584.0"/>
<line x1="586.7" y1="586.0" x2="579.0" y2="609.8"/>
<polygon points="579.0,609.8 569.5,606.7 579.9,606.9" fill="none"/>
<line x1="580.8" y1="604.3" x2="571.0" y2="601.9"/>
<line x1="586.7" y1="597.3" x2="582.4" y2="621.9"/>
<polygon points="582.4,621.9 572.5,620.2 582.9,619.0" fill="none"/>
<line x1="586.7" y1="607.3" x2="584.5" y2="632.2"/>
<line x1="584.5" y1="632.2" x2="574.5" y2="632.1"/>
<line x1="584.9" y1="628.0" x2="574.9" y2="627.9"/>
<line x1="585.3" y1="623.8" x2="575.2" y2="623.8"/>
<line x1="585.6" y1="619.7" x2="580.6" y2="619.6"/>
<line x1="586.7" y1="617.0" x2="586.7" y2="642.0"/>
<line x1="586.7" y1="642.0" x2="576.7" y2="642.8"/>
<line x1="586.7" y1="637.8" x2="576.7" y2="638.6"/>
</g>
<line x1="619.0" y1="90.5" x2="619.0" y2="631" stroke="#683822" stroke-width="1.5" stroke-dasharray="3.2,2.2"/>
<line x1="628.0" y1="90.5" x2="628.0" y2="631" stroke="#683822" stroke-width="1.5" stroke-dasharray="3.2,2.2"/>
<line x1="636.0" y1="90.5" x2="636.0" y2="631" stroke="#683822" stroke-width="1.5" stroke-dasharray="3.2,2.2"/>
<line x1="645.0" y1="90.5" x2="645.0" y2="631" stroke="#683822" stroke-width="1.5" stroke-dasharray="3.2,2.2"/>
<line x1="653.0" y1="90.5" x2="653.0" y2="631" stroke="#683822" stroke-width="1.5" stroke-dasharray="3.2,2.2"/>
<line x1="662.0" y1="90.5" x2="662.0" y2="631" stroke="#683822" stroke-width="1.5" stroke-dasharray="3.2,2.2"/>
<line x1="611.5" y1="89" x2="611.5" y2="632" stroke="#fff" stroke-width="1.5" stroke-dasharray="5,2"/>
<line x1="671" y1="88" x2="671" y2="632" stroke="#fff" stroke-width="2"/>
<line x1="710.5" y1="88" x2="710.5" y2="632" stroke="#fff" stroke-width="2"/>
<line x1="611" y1="632" x2="711" y2="632" stroke="#fff" stroke-width="2"/>
<line x1="611" y1="89.5" x2="711" y2="89.5" stroke="#fff" stroke-width="1.5"/>
<line x1="612" y1="89.5" x2="635" y2="89.5" stroke="#00e8f0" stroke-width="1.5"/>
<line x1="612" y1="139.7" x2="646.6" y2="139.7" stroke="#00e8f0" stroke-width="3"/>
<line x1="612" y1="181.6" x2="647.5" y2="181.6" stroke="#00e8f0" stroke-width="3"/>
<line x1="612" y1="217.7" x2="653.8" y2="217.7" stroke="#00e8f0" stroke-width="3"/>
<line x1="612" y1="248.8" x2="647.5" y2="248.8" stroke="#00e8f0" stroke-width="3"/>
<line x1="612" y1="275.8" x2="647.5" y2="275.8" stroke="#00e8f0" stroke-width="3"/>
<line x1="612" y1="299.8" x2="647.5" y2="299.8" stroke="#00e8f0" stroke-width="3"/>
<line x1="612" y1="322.5" x2="647.5" y2="322.5" stroke="#00e8f0" stroke-width="3"/>
<line x1="612" y1="342.7" x2="647.5" y2="342.7" stroke="#00e8f0" stroke-width="3"/>
<line x1="612" y1="360.7" x2="648.0" y2="360.7" stroke="#f0f000" stroke-width="3"/>
<line x1="612" y1="377.7" x2="648.0" y2="377.7" stroke="#f0f000" stroke-width="3"/>
<line x1="612" y1="393.3" x2="649.0" y2="393.3" stroke="#f0f000" stroke-width="3"/>
<line x1="612" y1="409.0" x2="649.0" y2="409.0" stroke="#f0f000" stroke-width="3"/>
<line x1="612" y1="422.3" x2="650.0" y2="422.3" stroke="#f0f000" stroke-width="3"/>
<line x1="612" y1="436.0" x2="650.0" y2="436.0" stroke="#f0f000" stroke-width="3"/>
<line x1="612" y1="448.7" x2="650.0" y2="448.7" stroke="#40f000" stroke-width="3"/>
<line x1="612" y1="460.7" x2="649.0" y2="460.7" stroke="#40f000" stroke-width="3"/>
<line x1="612" y1="471.7" x2="648.0" y2="471.7" stroke="#40f000" stroke-width="3"/>
<line x1="612" y1="482.7" x2="648.0" y2="482.7" stroke="#40f000" stroke-width="3"/>
<line x1="612" y1="493.0" x2="648.0" y2="493.0" stroke="#40f000" stroke-width="3"/>
<line x1="612" y1="503.0" x2="647.0" y2="503.0" stroke="#40f000" stroke-width="3"/>
<line x1="612" y1="512.0" x2="647.0" y2="512.0" stroke="#40f000" stroke-width="3"/>
<line x1="612" y1="521.7" x2="646.0" y2="521.7" stroke="#40f000" stroke-width="3"/>
<line x1="612" y1="530.0" x2="645.0" y2="530.0" stroke="#40f000" stroke-width="3"/>
<line x1="612" y1="538.7" x2="644.0" y2="538.7" stroke="#f00000" stroke-width="3"/>
<line x1="612" y1="546.7" x2="644.0" y2="546.7" stroke="#f00000" stroke-width="3"/>
<line x1="612" y1="554.3" x2="643.0" y2="554.3" stroke="#f00000" stroke-width="3"/>
<line x1="612" y1="561.7" x2="643.0" y2="561.7" stroke="#f00000" stroke-width="3"/>
<line x1="612" y1="569.3" x2="642.0" y2="569.3" stroke="#f00000" stroke-width="3"/>
<line x1="612" y1="576.7" x2="641.0" y2="576.7" stroke="#f00000" stroke-width="3"/>
<line x1="612" y1="583.3" x2="640.0" y2="583.3" stroke="#f00000" stroke-width="3"/>
<line x1="612" y1="590.0" x2="638.0" y2="590.0" stroke="#f00000" stroke-width="3"/>
<line x1="612" y1="596.7" x2="637.0" y2="596.7" stroke="#f00000" stroke-width="3"/>
<line x1="612" y1="602.7" x2="634.0" y2="602.7" stroke="#f00000" stroke-width="3"/>
<line x1="612" y1="608.3" x2="630.0" y2="608.3" stroke="#f00000" stroke-width="3"/>
<line x1="612" y1="615.3" x2="623.0" y2="615.3" stroke="#f00000" stroke-width="3"/>
<line x1="605" y1="181.6" x2="611" y2="181.6" stroke="#777" stroke-width="2"/>
<line x1="605" y1="248.8" x2="611" y2="248.8" stroke="#777" stroke-width="2"/>
<line x1="605" y1="299.8" x2="611" y2="299.8" stroke="#777" stroke-width="2"/>
<line x1="605" y1="342.7" x2="611" y2="342.7" stroke="#777" stroke-width="2"/>
<line x1="605" y1="377.7" x2="611" y2="377.7" stroke="#777" stroke-width="2"/>
<line x1="605" y1="409.0" x2="611" y2="409.0" stroke="#777" stroke-width="2"/>
<line x1="605" y1="436.0" x2="611" y2="436.0" stroke="#777" stroke-width="2"/>
<line x1="605" y1="460.7" x2="611" y2="460.7" stroke="#777" stroke-width="2"/>
<line x1="605" y1="482.7" x2="611" y2="482.7" stroke="#777" stroke-width="2"/>
<line x1="605" y1="503.0" x2="611" y2="503.0" stroke="#777" stroke-width="2"/>
<line x1="605" y1="521.0" x2="611" y2="521.0" stroke="#777" stroke-width="2"/>
<line x1="605" y1="538.7" x2="611" y2="538.7" stroke="#777" stroke-width="2"/>
<line x1="605" y1="554.3" x2="611" y2="554.3" stroke="#777" stroke-width="2"/>
<line x1="605" y1="569.3" x2="611" y2="569.3" stroke="#777" stroke-width="2"/>
<line x1="605" y1="583.3" x2="611" y2="583.3" stroke="#777" stroke-width="2"/>
<line x1="605" y1="596.7" x2="611" y2="596.7" stroke="#777" stroke-width="2"/>
<line x1="605" y1="608.3" x2="611" y2="608.3" stroke="#777" stroke-width="2"/>
<line x1="605" y1="621.0" x2="611" y2="621.0" stroke="#777" stroke-width="2"/>
<text x="673" y="102" fill="#fff" font-size="11">Inf.</text>
<text x="673" y="115" fill="#fff" font-size="11">Temp.</text>
<line x1="691" y1="90" x2="691" y2="632" stroke="#999" stroke-width="1.5" stroke-dasharray="4,3"/>
<line x1="691" y1="221.4" x2="691" y2="325.6" stroke="#3a8ad0" stroke-width="2"/>
<text x="672" y="283" fill="#3a8ad0" font-size="11">-0.1</text>
<line x1="692.7" y1="325.6" x2="692.7" y2="396.7" stroke="#e00000" stroke-width="2"/>
<text x="694" y="369" fill="#e00000" font-size="11">1.6</text>
<rect x="691" y="396.7" width="16.3" height="54.3" fill="none" stroke="#e00000" stroke-width="1.5"/>
<text x="692" y="432.3" fill="#e00000" font-size="11">11.0</text>
<rect x="691" y="451.0" width="13.0" height="44.0" fill="none" stroke="#e00000" stroke-width="1.5"/>
<text x="692" y="480.7" fill="#e00000" font-size="11">8.7</text>
<rect x="691" y="532.3" width="6.3" height="30.4" fill="none" stroke="#e00000" stroke-width="1.5"/>
<text x="692" y="555.7" fill="#e00000" font-size="11">4.3</text>
<rect x="691" y="562.7" width="19.7" height="28.0" fill="none" stroke="#e00000" stroke-width="1.5"/>
<text x="692" y="584.7" fill="#e00000" font-size="11">15.5</text>
<rect x="691" y="590.7" width="9.7" height="25.3" fill="none" stroke="#e00000" stroke-width="1.5"/>
<text x="692" y="611.7" fill="#e00000" font-size="11">6.0</text>
<rect x="685.3" y="495" width="5.7" height="37.3" fill="none" stroke="#3a8ad0" stroke-width="1.5"/>
<text x="672" y="521.3" fill="#3a8ad0" font-size="11">-3.4</text>
<defs><clipPath id="hc"><rect x="712" y="90" width="478" height="407"/></clipPath></defs>
<g clip-path="url(#hc)">
<circle cx="951" cy="294" r="24.0" fill="none" stroke="#747474" stroke-width="1" stroke-dasharray="4,3"/>
<circle cx="951" cy="294" r="48.0" fill="none" stroke="#747474" stroke-width="1" stroke-dasharray="4,3"/>
<circle cx="951" cy="294" r="72.0" fill="none" stroke="#747474" stroke-width="1" stroke-dasharray="4,3"/>
<circle cx="951" cy="294" r="96.0" fill="none" stroke="#747474" stroke-width="1" stroke-dasharray="4,3"/>
<circle cx="951" cy="294" r="120.0" fill="none" stroke="#747474" stroke-width="1" stroke-dasharray="4,3"/>
<circle cx="951" cy="294" r="144.0" fill="none" stroke="#747474" stroke-width="1" stroke-dasharray="4,3"/>
<circle cx="951" cy="294" r="168.0" fill="none" stroke="#747474" stroke-width="1" stroke-dasharray="4,3"/>
<circle cx="951" cy="294" r="192.0" fill="none" stroke="#747474" stroke-width="1" stroke-dasharray="4,3"/>
<circle cx="951" cy="294" r="216.0" fill="none" stroke="#747474" stroke-width="1" stroke-dasharray="4,3"/>
<circle cx="951" cy="294" r="240.0" fill="none" stroke="#747474" stroke-width="1" stroke-dasharray="4,3"/>
</g>
<rect x="711" y="89" width="480" height="410" fill="none" stroke="#fff" stroke-width="2"/>
<line x1="951" y1="89" x2="951" y2="499" stroke="#fff" stroke-width="2"/>
<line x1="711" y1="294" x2="1191" y2="294" stroke="#fff" stroke-width="2"/>
<g fill="#fff" font-size="11" text-anchor="middle" clip-path="url(#hc)">
<text x="929" y="310.5">10</text>
<text x="977" y="310.5">10</text>
<text x="905" y="310.5">20</text>
<text x="1001" y="310.5">20</text>
<text x="881" y="310.5">30</text>
<text x="1025" y="310.5">30</text>
<text x="857" y="310.5">40</text>
<text x="1049" y="310.5">40</text>
<text x="833" y="310.5">50</text>
<text x="1073" y="310.5">50</text>
<text x="809" y="310.5">60</text>
<text x="1097" y="310.5">60</text>
<text x="785" y="310.5">70</text>
<text x="1121" y="310.5">70</text>
<text x="761" y="310.5">80</text>
<text x="1145" y="310.5">80</text>
<text x="737" y="310.5">90</text>
<text x="1169" y="310.5">90</text>
<text x="713" y="310.5">100</text>
<text x="1193" y="310.5">100</text>
<text x="963" y="276.5">10</text>
<text x="963" y="324.5">10</text>
<text x="963" y="252.5">20</text>
<text x="963" y="348.5">20</text>
<text x="963" y="228.5">30</text>
<text x="963" y="372.5">30</text>
<text x="963" y="204.5">40</text>
<text x="963" y="396.5">40</text>
<text x="963" y="180.5">50</text>
<text x="963" y="420.5">50</text>
<text x="963" y="156.5">60</text>
<text x="963" y="444.5">60</text>
<text x="963" y="132.5">70</text>
<text x="963" y="468.5">70</text>
<text x="963" y="108.5">80</text>
<text x="963" y="492.5">80</text>
</g>
<polyline points="950.5,251.3 968.8,165.0" fill="none" stroke="#ff00ff" stroke-width="1.5"/>
<polyline points="950.5,251.3 1053.8,192.0 1070.5,157.5" fill="none" stroke="#00d8e0" stroke-width="1"/>
<polyline points="950.5,251.3 954.0,215.0 958.0,192.5 965.0,172.0 977.0,152.5 992.0,144.5 1004.5,140.5 1020.0,141.3 1037.5,145.8 1054.0,152.0 1065.0,155.8 1075.0,157.0" fill="none" stroke="#ff0000" stroke-width="2.2" stroke-linejoin="round"/>
<polyline points="1072.5,152.5 1070.0,147.5 1068.0,137.5 1069.0,132.0 1078.0,132.0 1095.0,138.8 1116.3,156.3" fill="none" stroke="#00ff00" stroke-width="2.2" stroke-linejoin="round"/>
<polyline points="1116.3,156.3 1135.0,181.3 1140.0,195.0 1141.3,205.0 1138.8,208.8 1140.0,213.8" fill="none" stroke="#ffff00" stroke-width="2.2" stroke-linejoin="round"/>
<polyline points="1140.0,213.8 1147.0,226.3 1150.5,222.0" fill="none" stroke="#00ffff" stroke-width="2.2" stroke-linejoin="round"/>
<circle cx="950.5" cy="251.3" r="4.5" fill="#c8c8c8" stroke="#888" stroke-width="0.8"/>
<text x="950.5" y="254.6" fill="#222" font-size="9" text-anchor="middle">0</text>
<circle cx="992.0" cy="144.5" r="4.5" fill="#c8c8c8" stroke="#888" stroke-width="0.8"/>
<text x="992.0" y="147.8" fill="#222" font-size="9" text-anchor="middle">1</text>
<circle cx="1054.0" cy="152.0" r="4.5" fill="#c8c8c8" stroke="#888" stroke-width="0.8"/>
<text x="1054.0" y="155.3" fill="#222" font-size="9" text-anchor="middle">2</text>
<circle cx="1072.5" cy="152.5" r="4.5" fill="#c8c8c8" stroke="#888" stroke-width="0.8"/>
<text x="1072.5" y="155.8" fill="#222" font-size="9" text-anchor="middle">3</text>
<circle cx="1069.0" cy="132.0" r="4.5" fill="#c8c8c8" stroke="#888" stroke-width="0.8"/>
<text x="1069.0" y="135.3" fill="#222" font-size="9" text-anchor="middle">4</text>
<circle cx="1078.0" cy="132.0" r="4.5" fill="#c8c8c8" stroke="#888" stroke-width="0.8"/>
<text x="1078.0" y="135.3" fill="#222" font-size="9" text-anchor="middle">5</text>
<circle cx="1116.3" cy="156.3" r="4.5" fill="#c8c8c8" stroke="#888" stroke-width="0.8"/>
<text x="1116.3" y="159.6" fill="#222" font-size="9" text-anchor="middle">6</text>
<circle cx="1038.8" cy="123" r="5" fill="none" stroke="#ddd" stroke-width="1.5"/>
<circle cx="1053.8" cy="192" r="5" fill="none" stroke="#ddd" stroke-width="1.5"/>
<rect x="1060.5" y="162.3" width="8" height="8" fill="none" stroke="#d08a00" stroke-width="2"/>
<text x="1045" y="138" fill="#fff" font-size="11">207/61 LM</text>
<text x="1072" y="174" fill="#d08a00" font-size="10">220/74</text>
<text x="1060" y="206.5" fill="#fff" font-size="10">225/60 RM</text>
<circle cx="1057" cy="287.5" r="2.5" fill="none" stroke="#2a90e0" stroke-width="1.2"/>
<text x="1064" y="300" fill="#2a90e0" font-size="11">UP=207/44</text>
<circle cx="1191" cy="152.5" r="1.5" fill="#2a90e0"/>
<text x="726" y="475" fill="#40e0e0" font-size="12.5">Critical Angle = 48</text>
<rect x="711" y="499" width="480" height="133" fill="none" stroke="#fff" stroke-width="2"/>
<line x1="831.0" y1="499" x2="831.0" y2="632" stroke="#fff" stroke-width="2"/>
<line x1="951.5" y1="499" x2="951.5" y2="632" stroke="#fff" stroke-width="2"/>
<line x1="1072.0" y1="499" x2="1072.0" y2="632" stroke="#fff" stroke-width="2"/>
<line x1="770.8" y1="499" x2="770.8" y2="631" stroke="#1a3a7a" stroke-width="2"/>
<line x1="712" y1="565.5" x2="830" y2="565.5" stroke="#1a3a7a" stroke-width="2"/>
<text x="826" y="511.5" fill="#fff" font-size="10" text-anchor="end">75.0 deg</text>
<text x="716" y="631" fill="#fff" font-size="10">Storm Slinky</text>
<circle cx="771.0" cy="565.9" r="4.8" fill="none" stroke="#ff0000" stroke-width="1"/>
<circle cx="767.8" cy="564.3" r="4.8" fill="none" stroke="#ff0000" stroke-width="1"/>
<circle cx="764.6" cy="562.7" r="4.8" fill="none" stroke="#ff0000" stroke-width="1"/>
<circle cx="761.4" cy="561.0" r="4.8" fill="none" stroke="#ff0000" stroke-width="1"/>
<circle cx="758.2" cy="559.4" r="4.8" fill="none" stroke="#ff0000" stroke-width="1"/>
<circle cx="755.7" cy="557.8" r="4.8" fill="none" stroke="#ff0000" stroke-width="1"/>
<circle cx="753.3" cy="556.2" r="4.8" fill="none" stroke="#ff0000" stroke-width="1"/>
<circle cx="750.9" cy="553.8" r="4.8" fill="none" stroke="#ff0000" stroke-width="1"/>
<circle cx="748.5" cy="551.4" r="4.8" fill="none" stroke="#ff0000" stroke-width="1"/>
<circle cx="746.9" cy="549.0" r="4.8" fill="none" stroke="#ff0000" stroke-width="1"/>
<circle cx="745.3" cy="546.5" r="4.8" fill="none" stroke="#ff0000" stroke-width="1"/>
<circle cx="745.7" cy="544.0" r="4.8" fill="none" stroke="#ff0000" stroke-width="1"/>
<circle cx="746.1" cy="541.7" r="4.8" fill="none" stroke="#ff0000" stroke-width="1"/>
<circle cx="747.7" cy="539.3" r="4.8" fill="none" stroke="#40e000" stroke-width="1"/>
<circle cx="749.3" cy="536.9" r="4.8" fill="none" stroke="#40e000" stroke-width="1"/>
<circle cx="750.5" cy="534.5" r="4.8" fill="none" stroke="#40e000" stroke-width="1"/>
<circle cx="751.7" cy="532.0" r="4.8" fill="none" stroke="#40e000" stroke-width="1"/>
<circle cx="753.3" cy="527.2" r="4.8" fill="none" stroke="#f0f000" stroke-width="1"/>
<circle cx="756.5" cy="524.8" r="4.8" fill="none" stroke="#f0f000" stroke-width="1"/>
<circle cx="760.6" cy="524.8" r="4.8" fill="none" stroke="#f0f000" stroke-width="1"/>
<circle cx="765.4" cy="526.4" r="4.8" fill="none" stroke="#00e0f0" stroke-width="1"/>
<circle cx="770.2" cy="527.2" r="4.8" fill="none" stroke="#00e0f0" stroke-width="1"/>
<circle cx="781.5" cy="529.6" r="4.8" fill="none" stroke="#c000e0" stroke-width="1"/>
<line x1="770.8" y1="566" x2="792.5" y2="543.6" stroke="#fff" stroke-width="2.5"/>
<line x1="831" y1="520.8" x2="837" y2="520.8" stroke="#fff" stroke-width="2"/>
<text x="848.8" y="524.4" fill="#fff" font-size="10" text-anchor="middle">600</text>
<line x1="831" y1="549.8" x2="837" y2="549.8" stroke="#fff" stroke-width="2"/>
<text x="848.8" y="553.4" fill="#fff" font-size="10" text-anchor="middle">700</text>
<line x1="831" y1="579.6" x2="837" y2="579.6" stroke="#fff" stroke-width="2"/>
<text x="848.8" y="583.2" fill="#fff" font-size="10" text-anchor="middle">800</text>
<line x1="831" y1="608.8" x2="837" y2="608.8" stroke="#fff" stroke-width="2"/>
<text x="848.8" y="612.4" fill="#fff" font-size="10" text-anchor="middle">900</text>
<line x1="849.0" y1="627" x2="849.0" y2="632" stroke="#fff" stroke-width="2"/>
<text x="849.0" y="626.8" fill="#fff" font-size="10" text-anchor="middle">320</text>
<line x1="884.0" y1="627" x2="884.0" y2="632" stroke="#fff" stroke-width="2"/>
<text x="884.0" y="626.8" fill="#fff" font-size="10" text-anchor="middle">330</text>
<line x1="919.0" y1="627" x2="919.0" y2="632" stroke="#fff" stroke-width="2"/>
<text x="919.0" y="626.8" fill="#fff" font-size="10" text-anchor="middle">340</text>
<line x1="951.0" y1="627" x2="951.0" y2="632" stroke="#fff" stroke-width="2"/>
<text x="951.0" y="626.8" fill="#fff" font-size="10" text-anchor="middle">3</text>
<polyline points="866.2,505.5 870.0,513.5 882.8,528.0 881.2,536.0 882.5,543.0 886.0,550.6 897.0,557.0 908.6,565.2 912.0,571.0 915.9,579.7 913.5,595.0 920.0,602.3 920.0,609.5 929.5,624.0 928.7,631.3 924.0,632.9" fill="none" stroke="#ff0000" stroke-width="2"/>
<line x1="952" y1="512.3" x2="957" y2="512.3" stroke="#999" stroke-width="2"/>
<line x1="1066" y1="512.3" x2="1071" y2="512.3" stroke="#999" stroke-width="2"/>
<text x="967.2" y="515.6" fill="#fff" font-size="9" text-anchor="middle">14</text>
<line x1="952" y1="529.0" x2="957" y2="529.0" stroke="#999" stroke-width="2"/>
<line x1="1066" y1="529.0" x2="1071" y2="529.0" stroke="#999" stroke-width="2"/>
<text x="967.2" y="532.3" fill="#fff" font-size="9" text-anchor="middle">12</text>
<line x1="952" y1="546.0" x2="957" y2="546.0" stroke="#999" stroke-width="2"/>
<line x1="1066" y1="546.0" x2="1071" y2="546.0" stroke="#999" stroke-width="2"/>
<text x="967.2" y="549.3" fill="#fff" font-size="9" text-anchor="middle">10</text>
<line x1="952" y1="563.0" x2="957" y2="563.0" stroke="#999" stroke-width="2"/>
<line x1="1066" y1="563.0" x2="1071" y2="563.0" stroke="#999" stroke-width="2"/>
<text x="967.2" y="566.3" fill="#fff" font-size="9" text-anchor="middle">8</text>
<line x1="952" y1="579.6" x2="957" y2="579.6" stroke="#999" stroke-width="2"/>
<line x1="1066" y1="579.6" x2="1071" y2="579.6" stroke="#999" stroke-width="2"/>
<text x="967.2" y="582.9" fill="#fff" font-size="9" text-anchor="middle">6</text>
<line x1="952" y1="596.8" x2="957" y2="596.8" stroke="#999" stroke-width="2"/>
<line x1="1066" y1="596.8" x2="1071" y2="596.8" stroke="#999" stroke-width="2"/>
<text x="967.2" y="600.1" fill="#fff" font-size="9" text-anchor="middle">4</text>
<line x1="952" y1="613.5" x2="957" y2="613.5" stroke="#999" stroke-width="2"/>
<line x1="1066" y1="613.5" x2="1071" y2="613.5" stroke="#999" stroke-width="2"/>
<text x="967.2" y="616.8" fill="#fff" font-size="9" text-anchor="middle">2</text>
<line x1="984.6" y1="627" x2="984.6" y2="632" stroke="#999" stroke-width="2"/>
<line x1="1001.6" y1="627" x2="1001.6" y2="632" stroke="#999" stroke-width="2"/>
<line x1="1018.7" y1="627" x2="1018.7" y2="632" stroke="#999" stroke-width="2"/>
<line x1="1035.7" y1="627" x2="1035.7" y2="632" stroke="#999" stroke-width="2"/>
<line x1="1052.7" y1="627" x2="1052.7" y2="632" stroke="#999" stroke-width="2"/>
<line x1="977.2" y1="499" x2="977.2" y2="632" stroke="#aaa" stroke-width="1.5" stroke-dasharray="3,3"/>
<line x1="1019" y1="499" x2="1019" y2="563" stroke="#a040b0" stroke-width="1.5" stroke-dasharray="3,3"/>
<line x1="1069" y1="499" x2="1069" y2="632" stroke="#a040b0" stroke-width="1.5" stroke-dasharray="3,3"/>
<g fill="#fff" font-size="9" text-anchor="middle"><text x="989.3" y="514">SR Wind</text><text x="989.3" y="524">v.</text><text x="989.3" y="534">Height</text></g>
<g fill="#a020c0" font-size="9" text-anchor="middle"><text x="1038.8" y="523">Classic</text><text x="1038.8" y="533">Supercell</text></g>
<polyline points="973.0,499.0 1001.6,507.0 1015.5,517.6 1031.4,523.6 1019.7,532.5 1016.0,545.0 1011.2,555.9 1011.2,570.8 999.5,581.4 995.3,595.2 982.5,603.7 977.2,612.2 980.4,615.4 1008.0,622.9 1018.7,628.2 1035.7,630.7" fill="none" stroke="#ff0000" stroke-width="2"/>
<line x1="995.9" y1="579.3" x2="995.9" y2="597.4" stroke="#4a8ae0" stroke-width="2"/>
<line x1="1014.8" y1="537" x2="1014.8" y2="556" stroke="#8020d0" stroke-width="2"/>
<line x1="998.9" y1="613" x2="998.9" y2="632" stroke="#a00000" stroke-width="1.5"/>
<line x1="1072" y1="524" x2="1191" y2="524" stroke="#fff" stroke-width="2"/>
<text x="1132" y="517" fill="#fff" font-size="14" text-anchor="middle">Psbl Haz. Type</text>
<text x="1132" y="579" fill="#e020e0" font-size="13" text-anchor="middle">PDS TOR</text>
<text x="60.0" y="79.5" fill="#fff" font-size="12" xml:space="preserve" textLength="434" lengthAdjust="spacing">HRRR 2021-03-24 00z, F047  VALID: Thu 2021-03-25 23z  AT: 33.58 N, 86.7 W</text>
<text x="1191.0" y="79.5" fill="#fff" font-size="12" text-anchor="end">Plots powered by SHARPpy - www.pivotalweather.com</text>
<rect x="31.5" y="656.5" width="1159" height="192" fill="none" stroke="#3892d4" stroke-width="3"/>
<line x1="322.5" y1="655" x2="322.5" y2="849" stroke="#3892d4" stroke-width="3"/>
<line x1="611.0" y1="655" x2="611.0" y2="849" stroke="#3892d4" stroke-width="3"/>
<line x1="901.0" y1="655" x2="901.0" y2="849" stroke="#3892d4" stroke-width="3"/>
<line x1="33" y1="669.5" x2="321" y2="669.5" stroke="#fff" stroke-width="1.5"/>
<text x="69.1" y="668.0" fill="#fff" font-size="11" text-anchor="middle">PCL</text>
<text x="105.0" y="668.0" fill="#fff" font-size="11" text-anchor="middle">CAPE</text>
<text x="141.2" y="668.0" fill="#fff" font-size="11" text-anchor="middle">CINH</text>
<text x="176.8" y="668.0" fill="#fff" font-size="11" text-anchor="middle">LCL</text>
<text x="212.8" y="668.0" fill="#fff" font-size="11" text-anchor="middle">LI</text>
<text x="248.7" y="668.0" fill="#fff" font-size="11" text-anchor="middle">LFC</text>
<text x="285.2" y="668.0" fill="#fff" font-size="11" text-anchor="middle">EL</text>
<rect x="35.5" y="706.5" width="285" height="11.5" fill="none" stroke="#5a3a1a" stroke-width="1"/>
<text x="69.1" y="683.0" fill="#fff" font-size="11" text-anchor="middle">SFC</text>
<text x="105.0" y="683.0" fill="#fff" font-size="11" text-anchor="middle">1496</text>
<text x="141.2" y="683.0" fill="#40ff00" font-size="11" text-anchor="middle">-19</text>
<text x="176.8" y="683.0" fill="#fff" font-size="11" text-anchor="middle">151</text>
<text x="212.8" y="683.0" fill="#fff" font-size="11" text-anchor="middle">-7</text>
<text x="248.7" y="683.0" fill="#fff" font-size="11" text-anchor="middle">716</text>
<text x="285.2" y="683.0" fill="#fff" font-size="11" text-anchor="middle">12871</text>
<text x="69.1" y="694.0" fill="#fff" font-size="11" text-anchor="middle">ML</text>
<text x="105.0" y="694.0" fill="#fff" font-size="11" text-anchor="middle">1581</text>
<text x="141.2" y="694.0" fill="#fff" font-size="11" text-anchor="middle">-1</text>
<text x="176.8" y="694.0" fill="#fff" font-size="11" text-anchor="middle">513</text>
<text x="212.8" y="694.0" fill="#fff" font-size="11" text-anchor="middle">-7</text>
<text x="248.7" y="694.0" fill="#fff" font-size="11" text-anchor="middle">606</text>
<text x="285.2" y="694.0" fill="#fff" font-size="11" text-anchor="middle">12871</text>
<text x="69.1" y="705.0" fill="#fff" font-size="11" text-anchor="middle">FCST</text>
<text x="105.0" y="705.0" fill="#fff" font-size="11" text-anchor="middle">2609</text>
<text x="141.2" y="705.0" fill="#fff" font-size="11" text-anchor="middle">0</text>
<text x="176.8" y="705.0" fill="#fff" font-size="11" text-anchor="middle">984</text>
<text x="212.8" y="705.0" fill="#fff" font-size="11" text-anchor="middle">-9</text>
<text x="248.7" y="705.0" fill="#fff" font-size="11" text-anchor="middle">984</text>
<text x="285.2" y="705.0" fill="#fff" font-size="11" text-anchor="middle">13236</text>
<text x="69.1" y="716.0" fill="#fff" font-size="11" text-anchor="middle">MU</text>
<text x="105.0" y="716.0" fill="#fff" font-size="11" text-anchor="middle">1858</text>
<text x="141.2" y="716.0" fill="#fff" font-size="11" text-anchor="middle">-1</text>
<text x="176.8" y="716.0" fill="#fff" font-size="11" text-anchor="middle">412</text>
<text x="212.8" y="716.0" fill="#fff" font-size="11" text-anchor="middle">-7</text>
<text x="248.7" y="716.0" fill="#fff" font-size="11" text-anchor="middle">528</text>
<text x="285.2" y="716.0" fill="#fff" font-size="11" text-anchor="middle">12871</text>
<line x1="33" y1="720.5" x2="321" y2="720.5" stroke="#fff" stroke-width="1.5"/>
<text x="38.7" y="734.3" fill="#fff" font-size="11">PW = 1.72in</text>
<text x="134.2" y="734.3" fill="#fff" font-size="11">K = 37</text>
<text x="207.5" y="734.3" fill="#fff" font-size="11">WNDG = 0.0</text>
<text x="38.7" y="745.3" fill="#fff" font-size="11">MeanW = 14.1g/kg</text>
<text x="134.2" y="745.3" fill="#fff" font-size="11">TT = 55</text>
<text x="207.5" y="745.3" fill="#fff" font-size="11">TEI = 15</text>
<text x="38.7" y="756.3" fill="#fff" font-size="11">LowRH = 94%</text>
<text x="134.2" y="756.3" fill="#fff" font-size="11">ConvT = 74F</text>
<text x="207.5" y="756.3" fill="#fff" font-size="11">3CAPE = 90</text>
<text x="38.7" y="767.3" fill="#fff" font-size="11">MidRH = 88%</text>
<text x="134.2" y="767.3" fill="#fff" font-size="11">maxT = 80F</text>
<text x="38.7" y="778.3" fill="#fff" font-size="11">DCAPE = 667</text>
<text x="134.2" y="778.3" fill="#fff" font-size="11">ESP = 0.0</text>
<text x="38.7" y="789.3" fill="#fff" font-size="11">DownT = 60F</text>
<text x="134.2" y="789.3" fill="#fff" font-size="11">MMP = 0.99</text>
<text x="207.5" y="789.3" fill="#fff" font-size="11">SigSvr = 64704 m3/s3</text>
<line x1="33" y1="791.5" x2="321" y2="791.5" stroke="#fff" stroke-width="1.5"/>
<line x1="231.5" y1="791.5" x2="231.5" y2="847" stroke="#fff" stroke-width="1.5"/>
<text x="38.7" y="805.0" fill="#fff" font-size="11">Sfc-3km AGL LR = 5.9 C/km</text>
<text x="38.7" y="816.0" fill="#fff" font-size="11">3-6km AGL LR = 7.0 C/km</text>
<text x="38.7" y="827.0" fill="#fff" font-size="11">850-500mb LR = 6.8 C/km</text>
<text x="38.7" y="838.0" fill="#fff" font-size="11">700-500mb LR = 7.5 C/km</text>
<text x="236.5" y="805.0" fill="#d020e0" font-size="11">Supercell = 24.6</text>
<text x="236.5" y="816.0" fill="#ff0000" font-size="11">STP (cin) = 7.0</text>
<text x="236.5" y="827.0" fill="#ff0000" font-size="11">STP (fix) = 5.0</text>
<text x="236.5" y="838.0" fill="#ffff00" font-size="11">SHIP = 1.6</text>
<line x1="324" y1="672.5" x2="610" y2="672.5" stroke="#fff" stroke-width="1.5"/>
<text x="398.5" y="674.0" fill="#fff" font-size="11" text-anchor="middle">EHI</text>
<text x="438.5" y="674.0" fill="#fff" font-size="11" text-anchor="middle">SRH</text>
<text x="490.8" y="670.7" fill="#fff" font-size="11" text-anchor="end">Shear</text>
<text x="533.4" y="670.7" fill="#fff" font-size="11" text-anchor="middle">MnWind</text>
<text x="584.0" y="670.7" fill="#fff" font-size="11" text-anchor="middle">SRW</text>
<text x="328.7" y="685.2" fill="#fff" font-size="11">SFC-1km</text>
<text x="406.8" y="685.2" fill="#fff" font-size="11" text-anchor="end">4.6</text>
<text x="448.4" y="685.2" fill="#fff" font-size="11" text-anchor="end">497</text>
<text x="490.8" y="685.2" fill="#fff" font-size="11" text-anchor="end">48</text>
<text x="546.4" y="685.2" fill="#fff" font-size="11" text-anchor="end">189/49</text>
<text x="602.5" y="685.2" fill="#fff" font-size="11" text-anchor="end">100/36</text>
<text x="328.7" y="696.4" fill="#fff" font-size="11">SFC-3km</text>
<text x="406.8" y="696.4" fill="#fff" font-size="11" text-anchor="end">6.2</text>
<text x="448.4" y="696.4" fill="#fff" font-size="11" text-anchor="end">660</text>
<text x="490.8" y="696.4" fill="#fff" font-size="11" text-anchor="end">65</text>
<text x="546.4" y="696.4" fill="#fff" font-size="11" text-anchor="end">205/61</text>
<text x="602.5" y="696.4" fill="#fff" font-size="11" text-anchor="end">126/22</text>
<text x="328.7" y="707.1" fill="#fff" font-size="11">Eff Inflow</text>
<text x="406.8" y="707.1" fill="#fff" font-size="11" text-anchor="end">6.2</text>
<text x="448.4" y="707.1" fill="#fff" font-size="11" text-anchor="end">663</text>
<text x="490.8" y="707.1" fill="#fff" font-size="11" text-anchor="end">64</text>
<text x="546.4" y="707.1" fill="#fff" font-size="11" text-anchor="end">202/59</text>
<text x="602.5" y="707.1" fill="#fff" font-size="11" text-anchor="end">121/24</text>
<text x="328.7" y="723.1" fill="#fff" font-size="11">SFC-6km</text>
<text x="490.8" y="723.1" fill="#fff" font-size="11" text-anchor="end">80</text>
<text x="546.4" y="723.1" fill="#fff" font-size="11" text-anchor="end">211/68</text>
<text x="602.5" y="723.1" fill="#fff" font-size="11" text-anchor="end">153/18</text>
<text x="328.7" y="734.3" fill="#fff" font-size="11">SFC-8km</text>
<text x="490.8" y="734.3" fill="#fff" font-size="11" text-anchor="end">81</text>
<text x="546.4" y="734.3" fill="#fff" font-size="11" text-anchor="end">215/69</text>
<text x="602.5" y="734.3" fill="#fff" font-size="11" text-anchor="end">166/15</text>
<text x="328.7" y="745.3" fill="#fff" font-size="11">LCL-EL (Cloud Layer)</text>
<text x="490.8" y="745.3" fill="#fff" font-size="11" text-anchor="end">83</text>
<text x="546.4" y="745.3" fill="#fff" font-size="11" text-anchor="end">220/74</text>
<text x="602.5" y="745.3" fill="#fff" font-size="11" text-anchor="end">200/15</text>
<text x="328.7" y="756.2" fill="#fff" font-size="11">Eff Shear (EBWD)</text>
<text x="490.8" y="756.2" fill="#fff" font-size="11" text-anchor="end">81</text>
<text x="546.4" y="756.2" fill="#fff" font-size="11" text-anchor="end">212/68</text>
<text x="602.5" y="756.2" fill="#fff" font-size="11" text-anchor="end">156/17</text>
<text x="328.7" y="772.0" fill="#fff" font-size="11">BRN Shear =</text>
<text x="490.8" y="772.0" fill="#fff" font-size="11" text-anchor="end">175 m2/s2</text>
<text x="328.7" y="783.3" fill="#fff" font-size="11">4-6km SR Wind =</text>
<text x="490.8" y="783.3" fill="#fff" font-size="11" text-anchor="end">197/26 kt</text>
<text x="328.7" y="799.1" fill="#fff" font-size="11">...Storm Motion Vectors...</text>
<text x="328.7" y="810.4" fill="#fff" font-size="11">Bunkers Right =</text>
<text x="490.8" y="810.4" fill="#3890d8" font-size="11" text-anchor="end">225/60 kt</text>
<text x="328.7" y="821.4" fill="#fff" font-size="11">Bunkers Left =</text>
<text x="490.8" y="821.4" fill="#e05050" font-size="11" text-anchor="end">207/80 kt</text>
<text x="328.7" y="832.4" fill="#fff" font-size="11">Corfidi Downshear =</text>
<text x="490.8" y="832.4" fill="#fff" font-size="11" text-anchor="end">240/117 kt</text>
<text x="328.7" y="843.4" fill="#fff" font-size="11">Corfidi Upshear =</text>
<text x="490.8" y="843.4" fill="#fff" font-size="11" text-anchor="end">267/44 kt</text>
<g stroke="#2060c0" stroke-width="1.1" fill="none" stroke-linejoin="round"><line x1="547.4" y1="792.3" x2="527.8" y2="808.9"/>
<polygon points="527.8,808.9 521.3,801.3 530.1,807.0" fill="none"/>
<line x1="532.2" y1="805.1" x2="525.1" y2="798.0"/>
<line x1="535.4" y1="802.4" x2="528.3" y2="795.3"/>
<line x1="538.6" y1="799.7" x2="531.6" y2="792.6"/>
<line x1="541.8" y1="797.0" x2="534.8" y2="789.9"/></g>
<g stroke="#c01010" stroke-width="1.1" fill="none" stroke-linejoin="round"><line x1="546.9" y1="793.2" x2="540.0" y2="817.3"/>
<polygon points="540.0,817.3 530.4,814.6 540.8,814.4" fill="none"/>
<line x1="541.6" y1="811.8" x2="531.7" y2="809.8"/>
<line x1="542.7" y1="807.7" x2="532.9" y2="805.7"/></g>
<text x="547.0" y="829.0" fill="#2a70c8" font-size="11" text-anchor="middle">1km &amp; 6km AGL</text>
<text x="547.0" y="842.0" fill="#2a70c8" font-size="11" text-anchor="middle">Wind Barbs</text>
<text x="757.2" y="677.3" fill="#fff" font-size="21" text-anchor="middle">SARS - Sounding Analogs</text>
<line x1="612" y1="684.2" x2="900" y2="684.2" stroke="#fff" stroke-width="1.5"/>
<line x1="757.2" y1="684.2" x2="757.2" y2="847" stroke="#fff" stroke-width="1.5"/>
<text x="684.2" y="699.3" fill="#fff" font-size="12" text-anchor="middle">SUPERCELL</text>
<text x="828.1" y="699.3" fill="#fff" font-size="12" text-anchor="middle">SGFNT HAIL</text>
<text x="684.2" y="742.3" fill="#fff" font-size="10" text-anchor="middle">No Quality Matches</text>
<text x="828.1" y="742.3" fill="#fff" font-size="10" text-anchor="middle">No Quality Matches</text>
<text x="684.2" y="827.7" fill="#cc11ee" font-size="10" text-anchor="middle" stroke="#cc11ee" stroke-width="0.35">(2 loose matches)</text>
<text x="684.2" y="841.9" fill="#cc11ee" font-size="10" text-anchor="middle" stroke="#cc11ee" stroke-width="0.35" textLength="74" lengthAdjust="spacingAndGlyphs">SARS: 100% TOR</text>
<text x="828.1" y="827.7" fill="#cc11ee" font-size="10" text-anchor="middle" stroke="#cc11ee" stroke-width="0.35">(3 loose matches)</text>
<text x="828.1" y="841.9" fill="#cc11ee" font-size="10" text-anchor="middle" stroke="#cc11ee" stroke-width="0.35" textLength="71" lengthAdjust="spacingAndGlyphs">SARS: 100% SIG</text>
<text x="1047.6" y="671.5" fill="#fff" font-size="17" text-anchor="middle">Effective Layer STP (with CIN)</text>
<line x1="903" y1="833.8" x2="1189" y2="833.8" stroke="#1f4f9f" stroke-width="2" stroke-dasharray="4,3.5"/>
<line x1="903" y1="819.2" x2="1189" y2="819.2" stroke="#1f4f9f" stroke-width="2" stroke-dasharray="4,3.5"/>
<line x1="903" y1="804.6" x2="1189" y2="804.6" stroke="#1f4f9f" stroke-width="2" stroke-dasharray="4,3.5"/>
<line x1="903" y1="790.0" x2="1189" y2="790.0" stroke="#1f4f9f" stroke-width="2" stroke-dasharray="4,3.5"/>
<line x1="903" y1="775.4" x2="1189" y2="775.4" stroke="#1f4f9f" stroke-width="2" stroke-dasharray="4,3.5"/>
<line x1="903" y1="760.8" x2="1189" y2="760.8" stroke="#1f4f9f" stroke-width="2" stroke-dasharray="4,3.5"/>
<line x1="903" y1="746.2" x2="1189" y2="746.2" stroke="#1f4f9f" stroke-width="2" stroke-dasharray="4,3.5"/>
<line x1="903" y1="731.6" x2="1189" y2="731.6" stroke="#1f4f9f" stroke-width="2" stroke-dasharray="4,3.5"/>
<line x1="903" y1="717.0" x2="1189" y2="717.0" stroke="#1f4f9f" stroke-width="2" stroke-dasharray="4,3.5"/>
<line x1="903" y1="702.4" x2="1189" y2="702.4" stroke="#1f4f9f" stroke-width="2" stroke-dasharray="4,3.5"/>
<line x1="903" y1="687.8" x2="1189" y2="687.8" stroke="#1f4f9f" stroke-width="2" stroke-dasharray="4,3.5"/>
<line x1="903" y1="673.2" x2="1189" y2="673.2" stroke="#1f4f9f" stroke-width="2" stroke-dasharray="4,3.5"/>
<text x="912.0" y="839.3" fill="#fff" font-size="15" text-anchor="middle">0</text>
<text x="912.0" y="824.7" fill="#fff" font-size="15" text-anchor="middle">1</text>
<text x="912.0" y="810.1" fill="#fff" font-size="15" text-anchor="middle">2</text>
<text x="912.0" y="795.5" fill="#fff" font-size="15" text-anchor="middle">3</text>
<text x="912.0" y="780.9" fill="#fff" font-size="15" text-anchor="middle">4</text>
<text x="912.0" y="766.3" fill="#fff" font-size="15" text-anchor="middle">5</text>
<text x="912.0" y="751.7" fill="#fff" font-size="15" text-anchor="middle">6</text>
<text x="912.0" y="737.1" fill="#fff" font-size="15" text-anchor="middle">7</text>
<text x="912.0" y="722.5" fill="#fff" font-size="15" text-anchor="middle">8</text>
<text x="912.0" y="707.9" fill="#fff" font-size="15" text-anchor="middle">9</text>
<text x="912.0" y="693.3" fill="#fff" font-size="15" text-anchor="middle">10</text>
<text x="912.0" y="678.7" fill="#fff" font-size="15" text-anchor="middle">11</text>
<line x1="903" y1="730.5" x2="1189" y2="730.5" stroke="#d01020" stroke-width="2"/>
<g stroke="#40f000" stroke-width="2" fill="none"><rect x="931.9" y="711.6" width="21.2" height="83.0"/><line x1="931.9" y1="755.5" x2="953.1" y2="755.5"/><line x1="942.9" y1="672.4" x2="942.9" y2="711.6"/><line x1="942.9" y1="794.6" x2="942.9" y2="816.6"/></g>
<g stroke="#40f000" stroke-width="2" fill="none"><rect x="973.6" y="767.7" width="20.7" height="51.4"/><line x1="973.6" y1="797.6" x2="994.3" y2="797.6"/><line x1="984.0" y1="710.3" x2="984.0" y2="767.7"/><line x1="984.0" y1="819.1" x2="984.0" y2="831.5"/></g>
<g stroke="#40f000" stroke-width="2" fill="none"><rect x="1014.5" y="778.7" width="21.6" height="46.4"/><line x1="1014.5" y1="808.6" x2="1036.1" y2="808.6"/><line x1="1024.7" y1="751.0" x2="1024.7" y2="778.7"/><line x1="1024.7" y1="825.1" x2="1024.7" y2="834.5"/></g>
<g stroke="#40f000" stroke-width="2" fill="none"><rect x="1055.8" y="794.6" width="21.2" height="34.2"/><line x1="1055.8" y1="815.1" x2="1077.0" y2="815.1"/><line x1="1066.6" y1="767.2" x2="1066.6" y2="794.6"/><line x1="1066.6" y1="828.8" x2="1066.6" y2="834.5"/></g>
<g stroke="#40f000" stroke-width="2" fill="none"><rect x="1097.5" y="803.6" width="20.7" height="28.4"/><line x1="1097.5" y1="821.6" x2="1118.2" y2="821.6"/><line x1="1107.7" y1="778.4" x2="1107.7" y2="803.6"/><line x1="1107.7" y1="832.0" x2="1107.7" y2="834.5"/></g>
<g stroke="#40f000" stroke-width="2" fill="none"><rect x="1138.1" y="822.6" width="21.7" height="11.4"/><line x1="1138.1" y1="830.0" x2="1159.8" y2="830.0"/><line x1="1148.9" y1="808.1" x2="1148.9" y2="822.6"/><line x1="1148.9" y1="834.0" x2="1148.9" y2="834.0"/></g>
<text x="943.0" y="847.0" fill="#fff" font-size="11" text-anchor="middle">EF4+</text>
<text x="984.0" y="847.0" fill="#fff" font-size="11" text-anchor="middle">EF3</text>
<text x="1025.0" y="847.0" fill="#fff" font-size="11" text-anchor="middle">EF2</text>
<text x="1067.0" y="847.0" fill="#fff" font-size="11" text-anchor="middle">EF1</text>
<text x="1108.0" y="847.0" fill="#fff" font-size="11" text-anchor="middle">EF0</text>
<text x="1149.0" y="847.0" fill="#fff" font-size="11" text-anchor="middle">NONTOR</text>
<rect x="1046" y="673.2" width="140.3" height="87.8" fill="#000" stroke="#fff" stroke-width="2"/>
<line x1="1046" y1="696.6" x2="1186.3" y2="696.6" stroke="#fff" stroke-width="2"/>
<clipPath id="pc"><rect x="1047" y="674" width="138" height="22"/></clipPath>
<g clip-path="url(#pc)"><text x="1049.6" y="684.5" fill="#fff" font-size="9.5">Prob EF2+ torn with supercell</text><text x="1049.6" y="695.5" fill="#fff" font-size="9.5">Sample CLIMO = .15 sigtor</text></g>
<text x="1049.6" y="707.0" fill="#e0e0e0" font-size="9.5">based on CAPE:</text>
<text x="1151.9" y="707.0" fill="#e0e0e0" font-size="9.5">0.13</text>
<text x="1049.6" y="717.0" fill="#e8e000" font-size="9.5">based on LCL:</text>
<text x="1151.9" y="717.0" fill="#e8e000" font-size="9.5">0.19</text>
<text x="1049.6" y="727.0" fill="#ee0000" font-size="9.5">based on ESRH:</text>
<text x="1151.9" y="727.0" fill="#ee0000" font-size="9.5">0.37</text>
<text x="1049.6" y="737.0" fill="#e8e000" font-size="9.5">based on EBWD:</text>
<text x="1151.9" y="737.0" fill="#e8e000" font-size="9.5">0.26</text>
<text x="1049.6" y="747.0" fill="#ee0000" font-size="9.5">based on STPC:</text>
<text x="1151.9" y="747.0" fill="#ee0000" font-size="9.5">0.34</text>
<text x="1049.6" y="757.0" fill="#e8e000" font-size="9.5">based on STP_fixed:</text>
<text x="1151.9" y="757.0" fill="#e8e000" font-size="9.5">0.25</text>
<text x="428.5" y="887" fill="#ccc" font-size="12">&#169; 2015-2021 pivotalweather.com - Soundings powered by <tspan fill="#2a7ab8">SHARPpy</tspan></text>
</svg>
</body></html>
